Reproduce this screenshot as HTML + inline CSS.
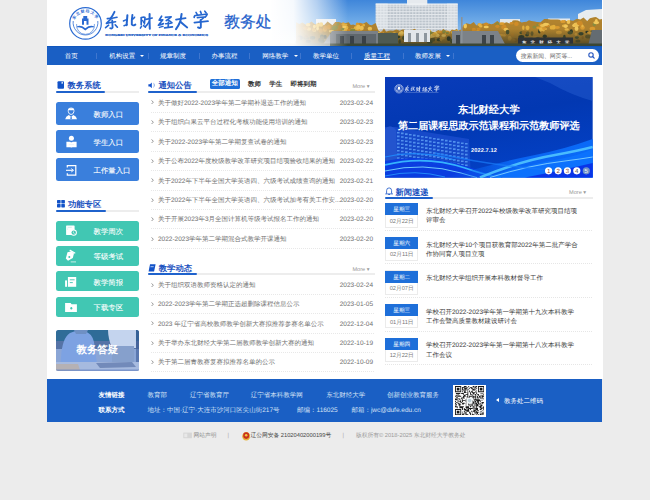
<!DOCTYPE html>
<html><head><meta charset="utf-8">
<style>
*{margin:0;padding:0;box-sizing:border-box}
html,body{text-rendering:geometricPrecision;width:650px;height:500px;overflow:hidden;background:#ececec;font-family:"Liberation Sans",sans-serif;font-size:6.5px;color:#555}
.a{position:absolute;white-space:nowrap}
#wrap{position:absolute;left:46.6px;top:0;width:556.4px;height:379px;background:#fff}
#hdr{position:absolute;left:47px;top:0;width:555.5px;height:46px;overflow:hidden;background:#fff}
#nav{position:absolute;left:47px;top:46px;width:554.8px;height:18.5px;background:#1a5fc4;box-shadow:inset 0 0.8px 0 #0f55bc}
.nv{position:absolute;top:0;height:18.5px;line-height:21.6px;color:#fff;font-size:6.5px;text-align:center;font-weight:500}
.sep{position:absolute;top:6px;width:0.7px;height:6px;background:#3f76cf}
.tri{position:absolute;top:54.5px;width:0;height:0;border-left:2px solid transparent;border-right:2px solid transparent;border-top:2px solid #fff}
#search{position:absolute;left:516px;top:48.6px;width:82.8px;height:13.6px;border-radius:7px;background:#fff}
.ttl{position:absolute;font-size:8.3px;font-weight:bold;color:#1b52c0;line-height:10px}
.uline{position:absolute;height:2px;background:#1f62cc;border-radius:1px}
.gline{position:absolute;height:2px;background:#ededed}
.bbtn{position:absolute;left:56px;width:83px;height:23px;border-radius:2.5px;background:#3a7fdc;color:#fff;font-size:7.4px;line-height:23px}
.bbtn span{position:absolute;left:37.5px;top:0.9px;font-weight:500;-webkit-text-stroke:0.08px #fff}
.tbtn{position:absolute;left:56px;width:83px;height:20px;border-radius:2.5px;background:#41c7b3;color:#fff;font-size:7.4px;line-height:20px}
.tbtn span{position:absolute;left:37.5px;top:1.4px;font-weight:500;-webkit-text-stroke:0.08px #fff}
.li{position:absolute;left:148px;width:227px;height:19.4px;line-height:19.4px;color:#707070;font-size:6.5px}
.li .t{position:absolute;left:10px;top:0}
.li .d{position:absolute;right:2px;top:0}
.li .c{position:absolute;left:2.5px;top:6.8px}
.dot{position:absolute;left:150.5px;width:223px;height:1px;background:repeating-linear-gradient(90deg,#e8e8e8 0 1px,transparent 1px 2px)}
.more{position:absolute;font-size:5.6px;color:#999}
.nb{position:absolute;left:385px;width:33px;height:24.4px;border:0.8px solid #ebebeb;background:#fff}
.nb .w{position:absolute;left:-0.8px;top:-0.8px;width:33px;height:12px;background:#1e6fd9;color:#fff;font-size:5.6px;line-height:14.2px;text-align:center;font-weight:500}
.nb .dt{position:absolute;left:0;top:11.5px;width:31.4px;height:12px;color:#777;font-size:5.7px;line-height:13px;text-align:center}
.nt{position:absolute;left:426px;color:#3a3a3a;font-size:6.5px;line-height:9.2px}
.ndot{position:absolute;left:385px;width:208px;height:1px;background:repeating-linear-gradient(90deg,#e6e6e6 0 1px,transparent 1px 2px)}
#foot{position:absolute;left:47px;top:379.2px;width:555.2px;height:43px;background:#1a5fc4}
.ft{position:absolute;color:#d5e2f5;font-size:6.5px;line-height:8px}
.fh{position:absolute;color:#fff;font-size:6.5px;line-height:8px;font-weight:bold}
.bt{position:absolute;font-size:5.75px;line-height:8px;color:#888}
</style></head><body>
<div id="wrap"></div>
<div id="hdr"></div>
<svg class="a" style="left:47px;top:0" width="554.8" height="46" viewBox="47 0 554.8 46">
<defs>
<linearGradient id="sky" x1="0" y1="0" x2="0" y2="1"><stop offset="0" stop-color="#3f86da"/><stop offset="0.5" stop-color="#72ade8"/><stop offset="1" stop-color="#aad0f2"/></linearGradient>
<linearGradient id="fade" x1="0" y1="0" x2="1" y2="0"><stop offset="0" stop-color="#fff" stop-opacity="1"/><stop offset="0.3" stop-color="#fff" stop-opacity="0.95"/><stop offset="0.6" stop-color="#fff" stop-opacity="0.6"/><stop offset="1" stop-color="#fff" stop-opacity="0"/></linearGradient>
<linearGradient id="fadeb" x1="0" y1="0" x2="0" y2="1"><stop offset="0" stop-color="#fff" stop-opacity="0"/><stop offset="1" stop-color="#fff" stop-opacity="0.55"/></linearGradient>
<linearGradient id="treedark" x1="0" y1="0" x2="0" y2="1"><stop offset="0" stop-color="#242a1c" stop-opacity="0"/><stop offset="1" stop-color="#242a1c" stop-opacity="0.7"/></linearGradient>
<pattern id="win" x="0" y="0" width="3.2" height="2.8" patternUnits="userSpaceOnUse"><rect width="3.2" height="2.8" fill="#e4e8ec"/><rect x="0.3" y="1.4" width="2.4" height="1" fill="#98a4b0"/></pattern>
</defs>
<rect x="270" y="0" width="333" height="46" fill="url(#sky)"/>
<rect x="316" y="19" width="20" height="8" fill="#e6eaee"/>
<rect x="500" y="19" width="20" height="8" fill="#dfe5ea"/>
<rect x="548" y="18.5" width="22" height="5" fill="#e3e8ec"/>
<path d="M578 14 L586 10 L602 9 L602 22 L578 22Z" fill="#e8ecef"/>
<rect x="375.7" y="4" width="82" height="32" fill="url(#win)"/>
<rect x="375.7" y="3.5" width="12" height="32" fill="#e8ecf0" opacity="0.55"/>
<rect x="447" y="3.5" width="10.7" height="32" fill="#e8ecf0" opacity="0.5"/>
<rect x="407" y="0" width="20.3" height="5.5" fill="#e6eaee"/>
<rect x="375.7" y="3.5" width="82" height="1.2" fill="#f0f3f6"/>
<rect x="380" y="29" width="22" height="2" fill="#b8c0c8" opacity="0.6"/>
<g opacity="0.97">
<path d="M296 46 L296 22.2 L296.0 22.2 L299.4 24.0 L302.3 22.4 L305.9 24.7 L308.9 23.5 L311.4 21.5 L314.2 23.8 L316.3 24.7 L318.8 22.4 L320.8 25.5 L324.3 25.0 L327.6 21.6 L330.2 23.5 L332.4 25.3 L335.2 22.1 L338.8 22.0 L342.7 23.3 L345.8 22.9 L348.7 22.2 L350.8 25.0 L353.3 24.6 L355.7 25.4 L359.5 24.5 L363.0 23.8 L366.5 22.0 L369.4 24.8 L371.8 25.2 L375.6 23.1 L378.3 30.3 L381.1 32.5 L383.9 28.6 L386.1 31.4 L390.1 30.5 L393.0 30.7 L396.5 29.4 L399.8 30.7 L403.0 29.2 L405.3 29.9 L409.2 29.9 L412.4 29.7 L414.6 28.8 L418.2 31.6 L421.0 31.2 L424.3 32.1 L428.2 30.1 L432.2 32.3 L435.4 32.0 L438.4 30.0 L440.9 32.0 L443.2 28.8 L446.8 31.6 L449.8 31.8 L451.9 29.5 L454.5 30.2 L456.8 28.8 L459.5 32.1 L463.4 25.3 L466.4 23.2 L470.3 24.2 L473.8 22.0 L476.2 25.2 L479.8 25.2 L483.0 23.2 L486.2 24.8 L488.8 23.4 L491.3 24.2 L493.4 23.8 L497.3 21.0 L500.4 23.4 L504.1 23.0 L506.7 22.2 L510.6 24.0 L512.8 20.6 L515.0 20.3 L517.9 20.6 L521.7 22.5 L523.9 22.0 L526.6 21.7 L529.0 20.2 L531.4 21.0 L534.8 21.5 L536.9 22.1 L540.6 22.2 L544.2 19.0 L547.1 19.1 L550.7 19.4 L554.1 19.5 L557.5 19.6 L559.6 19.8 L562.2 21.8 L564.8 20.1 L567.9 21.7 L570.1 20.3 L573.1 20.7 L577.0 18.8 L580.4 19.5 L583.5 17.5 L587.2 21.0 L589.9 18.3 L593.9 17.3 L596.0 17.0 L599.7 19.6 L602.0 19.0 L602 46Z" fill="#b08028"/>
<ellipse cx="486.1" cy="24.3" rx="2.4" ry="1.7" fill="#d08a22"/>
<ellipse cx="453.0" cy="40.6" rx="1.3" ry="1.2" fill="#2e3622"/>
<ellipse cx="308.9" cy="29.0" rx="2.3" ry="1.7" fill="#eab440"/>
<ellipse cx="435.5" cy="33.6" rx="1.9" ry="1.8" fill="#f4c858"/>
<ellipse cx="575.9" cy="34.4" rx="1.3" ry="1.4" fill="#d49a30"/>
<ellipse cx="515.5" cy="39.9" rx="2.6" ry="2.0" fill="#a06e20"/>
<ellipse cx="371.1" cy="40.5" rx="1.9" ry="1.9" fill="#b88024"/>
<ellipse cx="345.5" cy="27.6" rx="2.8" ry="2.1" fill="#e6ae36"/>
<ellipse cx="465.3" cy="26.1" rx="1.7" ry="2.3" fill="#f4c858"/>
<ellipse cx="523.4" cy="41.7" rx="3.0" ry="1.4" fill="#2e3622"/>
<ellipse cx="359.0" cy="30.0" rx="2.4" ry="2.0" fill="#dc9a2a"/>
<ellipse cx="321.1" cy="24.5" rx="2.1" ry="2.3" fill="#f0c04e"/>
<ellipse cx="571.3" cy="31.3" rx="1.6" ry="2.0" fill="#2e3622"/>
<ellipse cx="344.1" cy="31.1" rx="1.9" ry="1.8" fill="#f4c858"/>
<ellipse cx="381.9" cy="32.9" rx="1.9" ry="1.5" fill="#f0c04e"/>
<ellipse cx="594.4" cy="24.2" rx="1.8" ry="2.0" fill="#8a8a3a"/>
<ellipse cx="511.6" cy="23.2" rx="2.1" ry="1.2" fill="#d08a22"/>
<ellipse cx="431.0" cy="35.9" rx="3.0" ry="2.3" fill="#f0c04e"/>
<ellipse cx="324.9" cy="29.6" rx="2.0" ry="2.3" fill="#dc9a2a"/>
<ellipse cx="346.9" cy="34.3" rx="2.8" ry="1.7" fill="#b88024"/>
<ellipse cx="390.4" cy="35.6" rx="2.8" ry="1.5" fill="#d08a22"/>
<ellipse cx="541.5" cy="38.8" rx="2.9" ry="2.3" fill="#b88024"/>
<ellipse cx="497.6" cy="24.8" rx="2.0" ry="2.2" fill="#8a8a3a"/>
<ellipse cx="497.4" cy="26.2" rx="2.1" ry="1.8" fill="#d08a22"/>
<ellipse cx="485.8" cy="32.4" rx="2.6" ry="1.6" fill="#a06e20"/>
<ellipse cx="343.0" cy="29.2" rx="2.4" ry="1.2" fill="#8a8a3a"/>
<ellipse cx="317.7" cy="25.2" rx="2.1" ry="2.0" fill="#f0c04e"/>
<ellipse cx="406.2" cy="34.9" rx="1.5" ry="1.9" fill="#dc9a2a"/>
<ellipse cx="504.3" cy="35.5" rx="1.5" ry="1.3" fill="#d49a30"/>
<ellipse cx="460.8" cy="31.9" rx="2.4" ry="2.1" fill="#d08a22"/>
<ellipse cx="425.6" cy="34.6" rx="1.6" ry="1.8" fill="#f4c858"/>
<ellipse cx="403.8" cy="36.9" rx="2.3" ry="1.4" fill="#d49a30"/>
<ellipse cx="447.1" cy="32.8" rx="2.7" ry="2.2" fill="#dc9a2a"/>
<ellipse cx="503.9" cy="27.2" rx="2.6" ry="2.3" fill="#d08a22"/>
<ellipse cx="480.7" cy="26.1" rx="1.8" ry="1.5" fill="#eab440"/>
<ellipse cx="582.7" cy="37.4" rx="1.2" ry="1.6" fill="#a06e20"/>
<ellipse cx="481.8" cy="37.6" rx="2.4" ry="1.4" fill="#2e3622"/>
<ellipse cx="359.3" cy="42.0" rx="2.2" ry="2.1" fill="#d49a30"/>
<ellipse cx="574.5" cy="25.4" rx="2.3" ry="1.6" fill="#f4c858"/>
<ellipse cx="545.4" cy="28.9" rx="1.4" ry="1.2" fill="#eab440"/>
<ellipse cx="588.1" cy="36.5" rx="3.0" ry="2.1" fill="#6a5a24"/>
<ellipse cx="361.1" cy="33.6" rx="1.9" ry="2.4" fill="#a06e20"/>
<ellipse cx="333.6" cy="28.3" rx="2.0" ry="2.0" fill="#8a8a3a"/>
<ellipse cx="447.4" cy="33.1" rx="1.6" ry="1.4" fill="#8a8a3a"/>
<ellipse cx="411.7" cy="36.4" rx="1.7" ry="1.8" fill="#50562c"/>
<ellipse cx="359.0" cy="38.2" rx="1.8" ry="1.7" fill="#a06e20"/>
<ellipse cx="521.4" cy="36.7" rx="3.0" ry="1.7" fill="#2e3622"/>
<ellipse cx="306.0" cy="38.0" rx="2.8" ry="1.6" fill="#50562c"/>
<ellipse cx="356.3" cy="28.1" rx="2.5" ry="2.2" fill="#eab440"/>
<ellipse cx="501.9" cy="23.7" rx="2.8" ry="1.4" fill="#dc9a2a"/>
<ellipse cx="437.2" cy="35.3" rx="2.3" ry="1.9" fill="#f4c858"/>
<ellipse cx="317.6" cy="28.6" rx="1.4" ry="2.0" fill="#f4c858"/>
<ellipse cx="535.3" cy="37.8" rx="2.9" ry="1.4" fill="#d49a30"/>
<ellipse cx="568.5" cy="22.1" rx="1.8" ry="2.0" fill="#f0c04e"/>
<ellipse cx="526.0" cy="40.7" rx="1.4" ry="1.9" fill="#3a4226"/>
<ellipse cx="453.3" cy="32.5" rx="2.6" ry="1.8" fill="#e6ae36"/>
<ellipse cx="506.0" cy="29.4" rx="2.4" ry="1.6" fill="#f0c04e"/>
<ellipse cx="553.9" cy="27.0" rx="1.7" ry="2.2" fill="#e6ae36"/>
<ellipse cx="333.7" cy="39.9" rx="2.4" ry="1.2" fill="#3a4226"/>
<ellipse cx="478.0" cy="32.1" rx="2.1" ry="2.4" fill="#dc9a2a"/>
<ellipse cx="428.3" cy="31.2" rx="2.9" ry="1.4" fill="#eab440"/>
<ellipse cx="527.0" cy="34.8" rx="2.0" ry="1.8" fill="#3a4226"/>
<ellipse cx="430.4" cy="33.6" rx="2.7" ry="2.3" fill="#8a8a3a"/>
<ellipse cx="363.7" cy="34.6" rx="2.2" ry="1.3" fill="#50562c"/>
<ellipse cx="343.2" cy="24.2" rx="1.7" ry="2.0" fill="#dc9a2a"/>
<ellipse cx="361.9" cy="24.9" rx="1.5" ry="1.4" fill="#d08a22"/>
<ellipse cx="344.4" cy="26.8" rx="2.2" ry="1.4" fill="#f4c858"/>
<ellipse cx="331.4" cy="31.3" rx="2.6" ry="1.4" fill="#f4c858"/>
<ellipse cx="359.7" cy="24.3" rx="2.6" ry="1.5" fill="#d08a22"/>
<ellipse cx="325.5" cy="27.7" rx="2.2" ry="2.2" fill="#d08a22"/>
<ellipse cx="509.7" cy="38.4" rx="1.9" ry="2.4" fill="#d49a30"/>
<ellipse cx="566.7" cy="29.5" rx="2.2" ry="1.3" fill="#eab440"/>
<ellipse cx="532.0" cy="33.6" rx="1.5" ry="2.3" fill="#6a5a24"/>
<ellipse cx="534.4" cy="27.0" rx="2.0" ry="1.5" fill="#8a8a3a"/>
<ellipse cx="346.2" cy="30.1" rx="2.4" ry="2.0" fill="#eab440"/>
<ellipse cx="576.4" cy="26.5" rx="1.4" ry="1.9" fill="#eab440"/>
<ellipse cx="395.4" cy="39.7" rx="2.6" ry="1.4" fill="#a06e20"/>
<ellipse cx="415.5" cy="34.0" rx="2.4" ry="2.3" fill="#e6ae36"/>
<ellipse cx="410.5" cy="40.5" rx="2.0" ry="2.0" fill="#50562c"/>
<ellipse cx="362.7" cy="39.9" rx="2.5" ry="1.3" fill="#a06e20"/>
<ellipse cx="482.1" cy="31.9" rx="2.6" ry="1.2" fill="#d08a22"/>
<ellipse cx="357.3" cy="24.6" rx="1.6" ry="2.2" fill="#dc9a2a"/>
<ellipse cx="300.0" cy="37.9" rx="2.7" ry="2.4" fill="#3a4226"/>
<ellipse cx="521.3" cy="32.8" rx="1.9" ry="1.5" fill="#4a5028"/>
<ellipse cx="507.6" cy="32.1" rx="1.8" ry="2.3" fill="#4a5028"/>
<ellipse cx="384.1" cy="39.3" rx="2.5" ry="2.1" fill="#6a5a24"/>
<ellipse cx="565.0" cy="25.8" rx="3.0" ry="1.6" fill="#eab440"/>
<ellipse cx="547.3" cy="37.5" rx="2.5" ry="1.2" fill="#a06e20"/>
<ellipse cx="576.4" cy="24.7" rx="3.0" ry="2.1" fill="#f0c04e"/>
<ellipse cx="537.7" cy="39.4" rx="2.8" ry="2.2" fill="#3a4226"/>
<ellipse cx="448.8" cy="38.7" rx="2.1" ry="2.4" fill="#2e3622"/>
<ellipse cx="412.5" cy="41.2" rx="2.6" ry="1.8" fill="#b88024"/>
<ellipse cx="337.9" cy="24.1" rx="1.4" ry="1.7" fill="#8a8a3a"/>
<ellipse cx="440.9" cy="31.8" rx="1.8" ry="1.4" fill="#d08a22"/>
<ellipse cx="386.5" cy="35.9" rx="2.5" ry="1.7" fill="#eab440"/>
<ellipse cx="587.0" cy="32.0" rx="1.7" ry="1.2" fill="#2e3622"/>
<ellipse cx="551.5" cy="41.6" rx="1.7" ry="2.0" fill="#d49a30"/>
<ellipse cx="565.7" cy="26.2" rx="1.8" ry="1.8" fill="#f4c858"/>
<ellipse cx="582.5" cy="27.6" rx="2.3" ry="2.2" fill="#dc9a2a"/>
<ellipse cx="539.1" cy="24.9" rx="2.9" ry="1.3" fill="#8a8a3a"/>
<ellipse cx="401.8" cy="33.3" rx="1.2" ry="2.2" fill="#f0c04e"/>
<ellipse cx="395.4" cy="38.5" rx="1.6" ry="1.4" fill="#d49a30"/>
<ellipse cx="486.2" cy="27.0" rx="2.6" ry="1.3" fill="#f4c858"/>
<ellipse cx="390.4" cy="33.8" rx="1.6" ry="1.7" fill="#8a8a3a"/>
<ellipse cx="539.2" cy="27.7" rx="2.9" ry="1.2" fill="#dc9a2a"/>
<ellipse cx="394.3" cy="34.3" rx="2.0" ry="2.2" fill="#e6ae36"/>
<ellipse cx="485.1" cy="40.2" rx="2.0" ry="2.1" fill="#4a5028"/>
<ellipse cx="353.2" cy="35.1" rx="3.0" ry="2.3" fill="#50562c"/>
<ellipse cx="321.9" cy="36.9" rx="2.1" ry="2.3" fill="#4a5028"/>
<ellipse cx="546.1" cy="40.1" rx="2.3" ry="1.2" fill="#b88024"/>
<ellipse cx="598.3" cy="31.1" rx="2.5" ry="1.2" fill="#6a5a24"/>
<ellipse cx="562.7" cy="41.7" rx="2.9" ry="1.3" fill="#2e3622"/>
<ellipse cx="407.2" cy="37.7" rx="1.9" ry="1.7" fill="#a06e20"/>
<ellipse cx="353.1" cy="29.4" rx="2.6" ry="1.5" fill="#e6ae36"/>
<ellipse cx="579.7" cy="23.1" rx="2.9" ry="2.0" fill="#d08a22"/>
<ellipse cx="376.1" cy="34.9" rx="2.2" ry="1.3" fill="#d08a22"/>
<ellipse cx="452.3" cy="41.0" rx="2.4" ry="2.3" fill="#50562c"/>
<ellipse cx="400.5" cy="34.2" rx="2.7" ry="2.0" fill="#eab440"/>
<ellipse cx="381.5" cy="33.1" rx="2.2" ry="1.6" fill="#d08a22"/>
<ellipse cx="524.1" cy="32.8" rx="2.6" ry="2.0" fill="#a06e20"/>
<ellipse cx="358.3" cy="27.2" rx="2.2" ry="2.4" fill="#f0c04e"/>
<ellipse cx="325.0" cy="37.0" rx="1.7" ry="2.1" fill="#2e3622"/>
<ellipse cx="478.6" cy="29.0" rx="2.1" ry="1.3" fill="#d08a22"/>
<ellipse cx="492.9" cy="35.2" rx="1.4" ry="1.6" fill="#6a5a24"/>
<ellipse cx="358.2" cy="33.7" rx="2.5" ry="1.8" fill="#3a4226"/>
<ellipse cx="492.0" cy="36.5" rx="3.0" ry="2.2" fill="#2e3622"/>
<ellipse cx="375.9" cy="36.5" rx="2.0" ry="1.2" fill="#a06e20"/>
<ellipse cx="592.4" cy="28.8" rx="2.8" ry="2.0" fill="#dc9a2a"/>
<ellipse cx="581.0" cy="33.8" rx="2.7" ry="1.8" fill="#3a4226"/>
<ellipse cx="314.3" cy="30.5" rx="1.9" ry="1.6" fill="#eab440"/>
<ellipse cx="453.2" cy="33.9" rx="1.5" ry="2.3" fill="#8a8a3a"/>
<ellipse cx="352.8" cy="30.0" rx="2.6" ry="1.5" fill="#8a8a3a"/>
<ellipse cx="473.9" cy="30.0" rx="2.1" ry="2.3" fill="#d08a22"/>
<ellipse cx="321.8" cy="41.2" rx="2.7" ry="1.8" fill="#4a5028"/>
<ellipse cx="347.6" cy="31.1" rx="2.7" ry="1.8" fill="#e6ae36"/>
<ellipse cx="596.3" cy="22.6" rx="2.9" ry="1.7" fill="#f4c858"/>
<ellipse cx="433.0" cy="35.4" rx="2.9" ry="1.6" fill="#f4c858"/>
<ellipse cx="500.9" cy="35.3" rx="2.7" ry="1.3" fill="#d49a30"/>
<ellipse cx="308.1" cy="41.4" rx="2.6" ry="1.6" fill="#2e3622"/>
<ellipse cx="539.5" cy="31.4" rx="1.4" ry="2.1" fill="#2e3622"/>
<ellipse cx="312.5" cy="37.8" rx="2.8" ry="1.9" fill="#4a5028"/>
<ellipse cx="405.5" cy="36.5" rx="1.8" ry="1.3" fill="#2e3622"/>
<ellipse cx="422.0" cy="36.0" rx="2.1" ry="1.5" fill="#b88024"/>
<ellipse cx="421.9" cy="38.1" rx="1.3" ry="2.2" fill="#a06e20"/>
<ellipse cx="369.9" cy="28.7" rx="2.2" ry="1.9" fill="#f0c04e"/>
<ellipse cx="535.0" cy="40.5" rx="2.6" ry="1.7" fill="#d49a30"/>
<ellipse cx="568.5" cy="39.4" rx="2.7" ry="1.6" fill="#a06e20"/>
<ellipse cx="527.5" cy="27.8" rx="2.0" ry="2.4" fill="#e6ae36"/>
<ellipse cx="596.3" cy="20.8" rx="1.4" ry="1.8" fill="#f4c858"/>
<ellipse cx="439.6" cy="39.7" rx="3.0" ry="1.6" fill="#3a4226"/>
<ellipse cx="456.9" cy="31.8" rx="2.7" ry="1.4" fill="#f4c858"/>
<ellipse cx="580.5" cy="24.3" rx="2.3" ry="1.8" fill="#d08a22"/>
<ellipse cx="418.3" cy="32.2" rx="2.1" ry="2.3" fill="#e6ae36"/>
<ellipse cx="542.0" cy="29.7" rx="2.9" ry="2.4" fill="#eab440"/>
<ellipse cx="354.4" cy="38.3" rx="1.6" ry="2.2" fill="#b88024"/>
<ellipse cx="347.5" cy="37.1" rx="1.3" ry="1.9" fill="#3a4226"/>
<ellipse cx="469.6" cy="40.7" rx="1.7" ry="1.3" fill="#a06e20"/>
<ellipse cx="564.4" cy="36.9" rx="1.3" ry="2.1" fill="#3a4226"/>
<ellipse cx="576.9" cy="37.6" rx="2.0" ry="1.3" fill="#50562c"/>
<ellipse cx="523.3" cy="27.7" rx="1.2" ry="2.3" fill="#e6ae36"/>
<ellipse cx="592.4" cy="31.9" rx="2.3" ry="1.6" fill="#50562c"/>
<ellipse cx="513.3" cy="40.3" rx="2.2" ry="1.5" fill="#b88024"/>
<ellipse cx="376.2" cy="34.5" rx="1.5" ry="1.3" fill="#d08a22"/>
<ellipse cx="570.1" cy="32.7" rx="2.7" ry="1.8" fill="#4a5028"/>
<ellipse cx="414.9" cy="36.8" rx="2.6" ry="2.4" fill="#a06e20"/>
<ellipse cx="428.4" cy="38.0" rx="1.4" ry="1.8" fill="#2e3622"/>
<ellipse cx="441.2" cy="39.6" rx="1.7" ry="1.8" fill="#d49a30"/>
<ellipse cx="370.6" cy="36.0" rx="1.6" ry="1.4" fill="#50562c"/>
<ellipse cx="512.5" cy="35.0" rx="1.9" ry="1.9" fill="#b88024"/>
<ellipse cx="458.3" cy="36.3" rx="1.7" ry="2.3" fill="#4a5028"/>
<ellipse cx="351.2" cy="38.9" rx="1.5" ry="2.3" fill="#3a4226"/>
<ellipse cx="442.3" cy="38.0" rx="2.7" ry="1.4" fill="#d49a30"/>
<ellipse cx="557.1" cy="27.5" rx="2.8" ry="1.4" fill="#dc9a2a"/>
<ellipse cx="382.5" cy="38.4" rx="1.7" ry="1.6" fill="#d49a30"/>
<ellipse cx="359.4" cy="38.7" rx="1.5" ry="2.2" fill="#d49a30"/>
<ellipse cx="562.9" cy="21.4" rx="2.6" ry="1.5" fill="#dc9a2a"/>
<ellipse cx="490.6" cy="34.3" rx="1.9" ry="2.0" fill="#d49a30"/>
<ellipse cx="399.7" cy="37.1" rx="2.5" ry="1.3" fill="#b88024"/>
<ellipse cx="540.7" cy="24.8" rx="2.4" ry="1.7" fill="#d08a22"/>
<ellipse cx="343.3" cy="41.4" rx="2.0" ry="2.0" fill="#3a4226"/>
<ellipse cx="341.2" cy="39.7" rx="2.1" ry="1.3" fill="#50562c"/>
<ellipse cx="332.4" cy="34.1" rx="2.1" ry="1.6" fill="#2e3622"/>
<ellipse cx="582.5" cy="26.1" rx="1.2" ry="1.5" fill="#eab440"/>
<ellipse cx="547.8" cy="25.1" rx="1.8" ry="1.8" fill="#f4c858"/>
<ellipse cx="401.4" cy="32.9" rx="2.5" ry="1.7" fill="#f4c858"/>
<ellipse cx="547.1" cy="25.9" rx="2.4" ry="1.4" fill="#d08a22"/>
<ellipse cx="544.8" cy="36.3" rx="2.1" ry="1.9" fill="#2e3622"/>
<ellipse cx="348.5" cy="30.4" rx="1.5" ry="1.7" fill="#d08a22"/>
<ellipse cx="558.9" cy="32.5" rx="3.0" ry="1.8" fill="#d49a30"/>
<ellipse cx="320.7" cy="30.8" rx="2.2" ry="2.2" fill="#d08a22"/>
<ellipse cx="313.5" cy="29.8" rx="1.7" ry="1.8" fill="#dc9a2a"/>
<ellipse cx="479.7" cy="24.5" rx="2.4" ry="1.2" fill="#dc9a2a"/>
<ellipse cx="432.7" cy="39.7" rx="2.7" ry="2.0" fill="#6a5a24"/>
<ellipse cx="305.5" cy="28.3" rx="2.4" ry="1.7" fill="#d08a22"/>
<ellipse cx="504.4" cy="26.1" rx="1.6" ry="1.7" fill="#d08a22"/>
<ellipse cx="320.1" cy="40.0" rx="2.1" ry="1.9" fill="#4a5028"/>
<ellipse cx="443.7" cy="35.7" rx="2.3" ry="1.4" fill="#f4c858"/>
<ellipse cx="555.6" cy="41.8" rx="2.2" ry="2.0" fill="#d49a30"/>
<ellipse cx="335.4" cy="27.5" rx="2.6" ry="2.3" fill="#8a8a3a"/>
<ellipse cx="598.7" cy="37.1" rx="1.4" ry="1.4" fill="#d49a30"/>
<ellipse cx="516.4" cy="23.9" rx="2.3" ry="2.1" fill="#d08a22"/>
<ellipse cx="434.3" cy="34.4" rx="2.4" ry="1.7" fill="#e6ae36"/>
<ellipse cx="335.6" cy="40.2" rx="2.3" ry="1.8" fill="#6a5a24"/>
<ellipse cx="384.8" cy="38.9" rx="2.2" ry="1.7" fill="#6a5a24"/>
<ellipse cx="479.6" cy="24.8" rx="1.6" ry="1.5" fill="#eab440"/>
<ellipse cx="564.1" cy="38.9" rx="1.9" ry="2.2" fill="#4a5028"/>
<ellipse cx="399.7" cy="41.6" rx="1.2" ry="2.3" fill="#4a5028"/>
<ellipse cx="544.1" cy="28.6" rx="2.0" ry="1.3" fill="#dc9a2a"/>
<ellipse cx="314.4" cy="26.6" rx="1.5" ry="1.8" fill="#f4c858"/>
<ellipse cx="479.7" cy="32.1" rx="1.4" ry="1.7" fill="#d08a22"/>
<ellipse cx="344.9" cy="24.7" rx="2.6" ry="1.3" fill="#e6ae36"/>
<ellipse cx="383.3" cy="35.1" rx="1.7" ry="2.2" fill="#e6ae36"/>
<ellipse cx="361.7" cy="28.1" rx="2.1" ry="2.3" fill="#f0c04e"/>
<ellipse cx="444.1" cy="31.7" rx="1.8" ry="1.7" fill="#8a8a3a"/>
<ellipse cx="342.3" cy="34.9" rx="1.2" ry="2.2" fill="#a06e20"/>
<ellipse cx="355.6" cy="35.1" rx="2.2" ry="2.0" fill="#3a4226"/>
<ellipse cx="322.3" cy="38.4" rx="2.0" ry="2.1" fill="#6a5a24"/>
<ellipse cx="577.9" cy="41.0" rx="2.6" ry="1.6" fill="#6a5a24"/>
<ellipse cx="378.3" cy="33.1" rx="2.4" ry="1.3" fill="#f0c04e"/>
<ellipse cx="297.1" cy="41.9" rx="1.8" ry="1.3" fill="#50562c"/>
<ellipse cx="527.8" cy="33.1" rx="1.8" ry="1.8" fill="#6a5a24"/>
<ellipse cx="552.6" cy="27.4" rx="2.9" ry="2.2" fill="#e6ae36"/>
<ellipse cx="405.0" cy="37.8" rx="2.9" ry="2.3" fill="#4a5028"/>
<ellipse cx="429.7" cy="41.9" rx="2.9" ry="1.8" fill="#50562c"/>
<ellipse cx="542.6" cy="25.5" rx="2.6" ry="1.5" fill="#f0c04e"/>
<ellipse cx="545.7" cy="24.3" rx="2.9" ry="1.6" fill="#f4c858"/>
<ellipse cx="352.4" cy="31.0" rx="2.1" ry="2.3" fill="#8a8a3a"/>
<ellipse cx="466.6" cy="39.4" rx="1.9" ry="2.2" fill="#50562c"/>
<ellipse cx="328.9" cy="26.9" rx="2.0" ry="2.3" fill="#d08a22"/>
<ellipse cx="589.6" cy="32.8" rx="2.6" ry="1.4" fill="#d49a30"/>
<ellipse cx="308.1" cy="24.8" rx="2.3" ry="1.8" fill="#f0c04e"/>
<ellipse cx="298.7" cy="38.3" rx="1.5" ry="2.0" fill="#a06e20"/>
<ellipse cx="397.4" cy="37.0" rx="3.0" ry="1.4" fill="#3a4226"/>
<ellipse cx="542.3" cy="32.6" rx="1.8" ry="1.7" fill="#b88024"/>
<ellipse cx="410.0" cy="37.6" rx="2.4" ry="2.3" fill="#2e3622"/>
<ellipse cx="438.9" cy="32.1" rx="2.1" ry="1.3" fill="#dc9a2a"/>
<ellipse cx="395.1" cy="41.0" rx="2.0" ry="2.0" fill="#2e3622"/>
<ellipse cx="363.7" cy="25.2" rx="1.3" ry="1.4" fill="#e6ae36"/>
<ellipse cx="306.1" cy="36.9" rx="2.0" ry="1.9" fill="#a06e20"/>
<ellipse cx="576.5" cy="28.8" rx="1.9" ry="2.2" fill="#f4c858"/>
<rect x="296" y="29" width="306" height="17" fill="url(#treedark)"/>
</g>
<path d="M322 46 L332 31 L378 31 L378 46 Z" fill="#7a8086"/>
<path d="M336 34 L376 34 L376 46 L336 46Z" fill="#5f676d"/>
<rect x="340" y="36" width="4" height="10" fill="#394046"/><rect x="350" y="36" width="4" height="10" fill="#394046"/><rect x="362" y="36" width="4" height="10" fill="#394046"/>
<rect x="378" y="33" width="20" height="13" fill="#4e5a52"/>
<rect x="404" y="30" width="26" height="12" fill="#e2e6ea"/>
<rect x="408" y="33" width="3" height="9" fill="#8d969e"/><rect x="416" y="33" width="3" height="9" fill="#8d969e"/><rect x="424" y="33" width="3" height="9" fill="#8d969e"/>
<path d="M452 46 L452 31 L498 31 L506 46Z" fill="#7c8288"/>
<rect x="456" y="35" width="4" height="11" fill="#3c4348"/><rect x="482" y="35" width="4" height="11" fill="#3c4348"/><rect x="490" y="35" width="4" height="11" fill="#3c4348"/>
<rect x="461" y="17" width="1.6" height="29" fill="#8a9298"/>
<rect x="518" y="37.5" width="55" height="8.5" fill="#2e3236"/>
<g fill="#e8e8e8" font-size="4.4" font-weight="bold"><text x="522" y="43.8" letter-spacing="4.2">东北财经大学</text></g>
<path d="M588 46 L592 30 L602 30 L602 46Z" fill="#646c72"/>
<rect x="270" y="43.5" width="333" height="2.5" fill="#3a4636"/>
<rect x="270" y="0" width="78" height="46" fill="url(#fade)"/>
<rect x="270" y="26" width="60" height="20" fill="url(#fadeb)"/>
<rect x="47" y="0" width="223.5" height="46" fill="#fff"/>
<!-- logo -->
<g fill="none" stroke="#2b6bd2">
<circle cx="85.5" cy="23.4" r="15.8" stroke-width="1.2"/>
<path d="M73.2 21 A12.4 12.4 0 1 0 97.8 21" stroke-width="0.8"/>
<path d="M76.6 24 A9 9 0 1 0 94.4 24" stroke-width="0.6"/>
</g>
<g fill="#2b6bd2">
<path d="M82 24.8 L82 18.5 L83.3 18.5 L83.3 16 L87.2 16 L87.2 18.5 L88.5 18.5 L88.5 24.8 L86.5 24.8 L86.5 21 L84 21 L84 24.8Z"/>
<path d="M77 26.2 Q81 24.8 85.3 28.2 Q89.5 24.8 94 26.2 L93.6 27.4 Q89.5 26.5 85.3 30.4 Q81 26.5 77.4 27.4Z"/>
<path id="arc" d="M74 21.5 A11.8 11.8 0 0 1 97 21.5" fill="none" stroke="none"/><text font-size="3.8" font-weight="bold" font-family="Liberation Serif"><textPath href="#arc" startOffset="50%" text-anchor="middle" letter-spacing="0.9">东北财经大学</textPath></text>
</g>
<g fill="none" stroke="#2566cf" stroke-linecap="round" stroke-linejoin="round">
<path d="M114.5 11.8 Q113 15 110.5 18.6" stroke-width="1.9"/>
<path d="M107.3 18.6 Q112 18.4 117 17.2" stroke-width="1.6"/>
<path d="M111 18.8 Q108.5 21.2 106.4 23.4 Q110.5 22.6 115.6 21.8" stroke-width="1.6"/>
<path d="M112.2 20.4 L112.6 27.6 Q111.8 29 110.2 28.2" stroke-width="1.8"/>
<path d="M108.6 25.2 L105.6 27.6" stroke-width="1.7"/>
<path d="M115.2 24.8 L117.4 27.2" stroke-width="1.7"/>
<path d="M127.4 15.2 Q127 20 126.6 25.2" stroke-width="2.0"/>
<path d="M123.4 21 Q125.4 20 127 19.4" stroke-width="1.5"/>
<path d="M124 25.8 L127 24.6" stroke-width="1.5"/>
<path d="M132.4 15 Q131.6 20 131.8 24.4 Q132.6 26.2 135.4 24.6" stroke-width="1.9"/>
<path d="M131.8 19.6 Q133.6 18.6 134.6 17.2" stroke-width="1.5"/>
<path d="M141.2 17.8 L141.2 24.6" stroke-width="1.7"/>
<path d="M141.4 17.6 Q144 16.8 145 17.4 L144.4 24" stroke-width="1.6"/>
<path d="M142.6 20.4 L143.6 22.4" stroke-width="1.3"/>
<path d="M141.6 26.2 L140.4 28.2 M143.6 25.6 L145.4 27.2" stroke-width="1.5"/>
<path d="M145.8 19.4 Q149 18.8 152.2 18" stroke-width="1.6"/>
<path d="M149.6 14 Q149.4 21 149.8 28.8" stroke-width="2.0"/>
<path d="M149.2 21.6 Q147.6 24.6 145.4 26.6" stroke-width="1.6"/>
<path d="M161.6 16.2 Q160 18.6 159.2 20.2 Q161 20 162.8 19.8 Q160.4 22.8 158.4 25.2 Q161 24.6 163.4 23.6" stroke-width="1.7"/>
<path d="M159.4 27.4 L163 26.4" stroke-width="1.5"/>
<path d="M165.4 17.4 Q168.6 16.8 171.2 16.8 Q168.6 19 166.2 20.6" stroke-width="1.6"/>
<path d="M167.6 19.6 Q170 21 172 22.8" stroke-width="1.6"/>
<path d="M165.6 23.8 L171 23.4" stroke-width="1.4"/>
<path d="M168.4 22 L168.2 27.2" stroke-width="1.7"/>
<path d="M164.6 27.8 Q168.6 27.4 172.4 26.8" stroke-width="1.7"/>
<path d="M176 19.6 Q180.5 18.8 185.6 18.2" stroke-width="1.7"/>
<path d="M181.6 14 Q181 18 180.2 21.6 Q178.6 25.6 176 29.2" stroke-width="2.0"/>
<path d="M180.4 21.8 Q183.4 24.6 187.2 27.4" stroke-width="1.9"/>
<path d="M196 12.4 L197.2 14.4 M200.4 11.4 L201.2 13.4 M204.8 11.2 L206.2 13" stroke-width="1.6"/>
<path d="M194.2 17.4 Q194 15.6 196 15.4 Q202 14.6 207.2 14 Q206.6 16 205.2 17.2" stroke-width="1.7"/>
<path d="M197.4 17.6 Q201 17 204.4 17 Q202.6 18.8 200.6 20.2" stroke-width="1.6"/>
<path d="M200.6 20.2 Q201 24 200.8 27.4 Q199.8 28.6 198 27.4" stroke-width="1.9"/>
<path d="M194.4 22.6 Q201 21.8 208 21.2" stroke-width="1.7"/>
</g>
<text x="105.3" y="35.9" font-size="3" fill="#1d5cc4" font-family="Liberation Serif" font-weight="bold" stroke="#1d5cc4" stroke-width="0.2" textLength="102.7" lengthAdjust="spacingAndGlyphs">DONGBEI UNIVERSITY OF FINANCE &amp; ECONOMICS</text>
<text x="224.2" y="27" font-size="15.8" fill="#1f5fcb" stroke="#1f5fcb" stroke-width="0.25">教务处</text>
</svg>
<div id="nav"></div>
<div class="nv a" style="left:46.2px;width:50px;top:46px">首页</div>
<div class="nv a" style="left:97.2px;width:50px;top:46px">机构设置</div>
<div class="nv a" style="left:148px;width:50px;top:46px">规章制度</div>
<div class="nv a" style="left:199.5px;width:50px;top:46px">办事流程</div>
<div class="nv a" style="left:250.3px;width:50px;top:46px">网络教学</div>
<div class="nv a" style="left:301.1px;width:50px;top:46px">教学单位</div>
<div class="nv a" style="left:352.1px;width:50px;top:46px;text-decoration:underline">质量工程</div>
<div class="nv a" style="left:403.1px;width:50px;top:46px">教师发展</div>
<div class="sep" style="left:96.2px;top:52.5px"></div>
<div class="sep" style="left:148px;top:52.5px"></div>
<div class="sep" style="left:199px;top:52.5px"></div>
<div class="sep" style="left:249.2px;top:52.5px"></div>
<div class="sep" style="left:300.4px;top:52.5px"></div>
<div class="sep" style="left:351.3px;top:52.5px"></div>
<div class="sep" style="left:403px;top:52.5px"></div>
<div class="sep" style="left:453.4px;top:52.5px"></div>
<div class="tri" style="left:140.2px"></div>
<div class="tri" style="left:293.5px"></div>
<div class="tri" style="left:446px"></div>
<div id="search"><span class="a" style="left:4.8px;top:4.8px;font-size:5.8px;line-height:8px;color:#666">搜索新闻、网页等...</span>
<svg class="a" style="left:71.5px;top:3px" width="7" height="7" viewBox="0 0 7 7"><circle cx="3" cy="2.9" r="2.2" fill="none" stroke="#2858c0" stroke-width="1.1"/><path d="M4.6 4.5 L6.2 6.1" stroke="#2858c0" stroke-width="1.2" stroke-linecap="round"/></svg></div>
<div class="ttl a" style="left:67.5px;top:80.3px">教务系统</div>
<div class="gline" style="left:56px;top:91px;width:83px;"></div>
<div class="uline" style="left:56px;top:91px;width:49px"></div>
<div class="bbtn" style="top:102px"><span>教师入口</span></div>
<div class="bbtn" style="top:130px"><span>学生入口</span></div>
<div class="bbtn" style="top:158px"><span>工作量入口</span></div>
<div class="ttl a" style="left:68px;top:199px">功能专区</div>
<div class="gline" style="left:56px;top:209.6px;width:83px;"></div>
<div class="uline" style="left:56px;top:209.6px;width:49.8px"></div>
<div class="tbtn" style="top:220.5px"><span>教学周次</span></div>
<div class="tbtn" style="top:246px"><span>等级考试</span></div>
<div class="tbtn" style="top:271.3px"><span>教学简报</span></div>
<div class="tbtn" style="top:296.5px"><span>下载专区</span></div>
<div id="qa" class="a" style="left:56px;top:330px;width:83.3px;height:41px;border-radius:2.5px;overflow:hidden">
<svg width="83.3" height="41" viewBox="0 0 83.3 41" style="position:absolute;left:0;top:0">
<rect width="83.3" height="41" fill="#86a2d4"/>
<rect width="83.3" height="11" fill="#2f6c98"/>
<rect y="11" width="83.3" height="8" fill="#5573a6"/>
<rect y="19" width="83.3" height="14" fill="#8ba6d6"/>
<path d="M4 41 L5 28 Q6 8 14 3 Q20 0 28 1 Q36 3 38 12 L40 26 L42 41Z" fill="#7da2e2"/>
<path d="M18 0 L32 0 L30 4 L20 4Z" fill="#6f90c4"/>
<path d="M52 0 L80 0 L80 18 L56 18 Q52 8 52 0Z" fill="#c4d4ee"/>
<path d="M56 16 L78 16 L78 32 L56 32Z" fill="#86a0cc"/>
<path d="M80 0 L83.3 0 L83.3 41 L80 41Z" fill="#3a5a96" opacity="0.6"/>
<rect y="32" width="83.3" height="9" fill="#a6badf"/>
<path d="M0 34 L22 34 L24 40 L0 41Z" fill="#c4a88a" opacity="0.5"/>
<path d="M40 33 L76 32 L80 37 L44 38Z" fill="#5d76aa" opacity="0.7"/>
<rect y="39.5" width="83.3" height="1.5" fill="#6a86c0" opacity="0.7"/>
</svg>
<div class="a" style="left:20.5px;top:13.5px;font-size:10.4px;line-height:13px;font-weight:bold;color:#fff">教务答疑</div>
</div>
<div class="ttl a" style="left:158.5px;top:80px">通知公告</div>
<div class="gline" style="left:148px;top:90.8px;width:227px;"></div>
<div class="uline" style="left:148px;top:90.8px;width:48.8px"></div>
<div class="a" style="left:209.7px;top:79.4px;width:30.3px;height:9.6px;border-radius:1.5px;background:#1f6fd8;color:#fff;font-weight:bold;font-size:6.5px;line-height:9.6px;text-align:center">全部通知</div>
<div class="a" style="left:248px;top:79.6px;color:#333;font-weight:bold;font-size:6.5px;line-height:9px">教师</div>
<div class="a" style="left:269.3px;top:79.6px;color:#333;font-weight:bold;font-size:6.5px;line-height:9px">学生</div>
<div class="a" style="left:290.5px;top:79.6px;color:#333;font-weight:bold;font-size:6.5px;line-height:9px">即将到期</div>
<div class="more" style="left:352.4px;top:83px;line-height:8px">More ▾</div>
<div class="ttl a" style="left:158.8px;top:263px">教学动态</div>
<div class="gline" style="left:148px;top:273.3px;width:227px;"></div>
<div class="uline" style="left:148px;top:273.3px;width:49px"></div>
<div class="more" style="left:352.4px;top:266px;line-height:8px">More ▾</div>
<div id="banner" class="a" style="left:385px;top:77.2px;width:207.7px;height:100.5px;overflow:hidden">
<svg width="207.7" height="100.5" viewBox="0 0 207.7 100.5" style="position:absolute;left:0;top:0">
<defs>
<linearGradient id="bg1" x1="0" y1="0" x2="0.35" y2="1"><stop offset="0" stop-color="#0a3cba"/><stop offset="0.5" stop-color="#0238b2"/><stop offset="1" stop-color="#0340c4"/></linearGradient>
<linearGradient id="rw" x1="0" y1="0" x2="1" y2="0"><stop offset="0" stop-color="#0a60f0" stop-opacity="0"/><stop offset="0.45" stop-color="#0a66f4" stop-opacity="0.95"/><stop offset="1" stop-color="#0a6af8" stop-opacity="1"/></linearGradient>
<linearGradient id="bld2" x1="0" y1="0" x2="0" y2="1"><stop offset="0" stop-color="#3a70dc" stop-opacity="0.5"/><stop offset="1" stop-color="#3f86f0" stop-opacity="0.7"/></linearGradient>
</defs>
<rect width="207.7" height="100.5" fill="url(#bg1)"/>
<path d="M150 0 L207.7 0 L207.7 24 Q186 18 165 6Z" fill="#3a74e0" opacity="0.3"/>

<path d="M0 50 L10 50 L84 62 L86 100.5 L0 100.5Z" fill="#1a4ccc" opacity="0.85"/>
<path d="M12.0 55.0h2.6v1.6h-2.6zM16.0 55.6h2.6v1.6h-2.6zM20.0 56.3h2.6v1.6h-2.6zM24.0 57.0h2.6v1.6h-2.6zM28.0 57.6h2.6v1.6h-2.6zM32.0 58.2h2.6v1.6h-2.6zM36.0 58.9h2.6v1.6h-2.6zM40.0 59.5h2.6v1.6h-2.6zM44.0 60.2h2.6v1.6h-2.6zM48.0 60.9h2.6v1.6h-2.6zM52.0 61.5h2.6v1.6h-2.6zM56.0 62.1h2.6v1.6h-2.6zM60.0 62.8h2.6v1.6h-2.6zM64.0 63.5h2.6v1.6h-2.6zM68.0 64.1h2.6v1.6h-2.6zM72.0 64.8h2.6v1.6h-2.6zM76.0 65.4h2.6v1.6h-2.6zM80.0 66.0h2.6v1.6h-2.6zM12.0 58.6h2.6v1.6h-2.6zM16.0 59.2h2.6v1.6h-2.6zM20.0 59.9h2.6v1.6h-2.6zM24.0 60.6h2.6v1.6h-2.6zM28.0 61.2h2.6v1.6h-2.6zM32.0 61.9h2.6v1.6h-2.6zM36.0 62.5h2.6v1.6h-2.6zM40.0 63.1h2.6v1.6h-2.6zM44.0 63.8h2.6v1.6h-2.6zM48.0 64.5h2.6v1.6h-2.6zM52.0 65.1h2.6v1.6h-2.6zM56.0 65.8h2.6v1.6h-2.6zM60.0 66.4h2.6v1.6h-2.6zM64.0 67.0h2.6v1.6h-2.6zM68.0 67.7h2.6v1.6h-2.6zM72.0 68.3h2.6v1.6h-2.6zM76.0 69.0h2.6v1.6h-2.6zM80.0 69.7h2.6v1.6h-2.6zM12.0 62.2h2.6v1.6h-2.6zM16.0 62.9h2.6v1.6h-2.6zM20.0 63.5h2.6v1.6h-2.6zM24.0 64.2h2.6v1.6h-2.6zM28.0 64.8h2.6v1.6h-2.6zM32.0 65.5h2.6v1.6h-2.6zM36.0 66.1h2.6v1.6h-2.6zM40.0 66.8h2.6v1.6h-2.6zM44.0 67.4h2.6v1.6h-2.6zM48.0 68.0h2.6v1.6h-2.6zM52.0 68.7h2.6v1.6h-2.6zM56.0 69.4h2.6v1.6h-2.6zM60.0 70.0h2.6v1.6h-2.6zM64.0 70.7h2.6v1.6h-2.6zM68.0 71.3h2.6v1.6h-2.6zM72.0 72.0h2.6v1.6h-2.6zM76.0 72.6h2.6v1.6h-2.6zM80.0 73.2h2.6v1.6h-2.6zM12.0 65.8h2.6v1.6h-2.6zM16.0 66.5h2.6v1.6h-2.6zM20.0 67.1h2.6v1.6h-2.6zM24.0 67.8h2.6v1.6h-2.6zM28.0 68.4h2.6v1.6h-2.6zM32.0 69.0h2.6v1.6h-2.6zM36.0 69.7h2.6v1.6h-2.6zM40.0 70.3h2.6v1.6h-2.6zM44.0 71.0h2.6v1.6h-2.6zM48.0 71.6h2.6v1.6h-2.6zM52.0 72.3h2.6v1.6h-2.6zM56.0 73.0h2.6v1.6h-2.6zM60.0 73.6h2.6v1.6h-2.6zM64.0 74.2h2.6v1.6h-2.6zM68.0 74.9h2.6v1.6h-2.6zM72.0 75.5h2.6v1.6h-2.6zM76.0 76.2h2.6v1.6h-2.6zM80.0 76.8h2.6v1.6h-2.6zM12.0 69.4h2.6v1.6h-2.6zM16.0 70.1h2.6v1.6h-2.6zM20.0 70.7h2.6v1.6h-2.6zM24.0 71.4h2.6v1.6h-2.6zM28.0 72.0h2.6v1.6h-2.6zM32.0 72.7h2.6v1.6h-2.6zM36.0 73.3h2.6v1.6h-2.6zM40.0 74.0h2.6v1.6h-2.6zM44.0 74.6h2.6v1.6h-2.6zM48.0 75.2h2.6v1.6h-2.6zM52.0 75.9h2.6v1.6h-2.6zM56.0 76.6h2.6v1.6h-2.6zM60.0 77.2h2.6v1.6h-2.6zM64.0 77.9h2.6v1.6h-2.6zM68.0 78.5h2.6v1.6h-2.6zM72.0 79.2h2.6v1.6h-2.6zM76.0 79.8h2.6v1.6h-2.6zM80.0 80.5h2.6v1.6h-2.6zM12.0 73.0h2.6v1.6h-2.6zM16.0 73.7h2.6v1.6h-2.6zM20.0 74.3h2.6v1.6h-2.6zM24.0 75.0h2.6v1.6h-2.6zM28.0 75.6h2.6v1.6h-2.6zM32.0 76.2h2.6v1.6h-2.6zM36.0 76.9h2.6v1.6h-2.6zM40.0 77.5h2.6v1.6h-2.6zM44.0 78.2h2.6v1.6h-2.6zM48.0 78.8h2.6v1.6h-2.6zM52.0 79.5h2.6v1.6h-2.6zM56.0 80.2h2.6v1.6h-2.6zM60.0 80.8h2.6v1.6h-2.6zM64.0 81.5h2.6v1.6h-2.6zM68.0 82.1h2.6v1.6h-2.6zM72.0 82.8h2.6v1.6h-2.6zM76.0 83.4h2.6v1.6h-2.6zM80.0 84.0h2.6v1.6h-2.6zM12.0 76.6h2.6v1.6h-2.6zM16.0 77.2h2.6v1.6h-2.6zM20.0 77.9h2.6v1.6h-2.6zM24.0 78.5h2.6v1.6h-2.6zM28.0 79.2h2.6v1.6h-2.6zM32.0 79.8h2.6v1.6h-2.6zM36.0 80.5h2.6v1.6h-2.6zM40.0 81.1h2.6v1.6h-2.6zM44.0 81.8h2.6v1.6h-2.6zM48.0 82.4h2.6v1.6h-2.6zM52.0 83.1h2.6v1.6h-2.6zM56.0 83.8h2.6v1.6h-2.6zM60.0 84.4h2.6v1.6h-2.6zM64.0 85.0h2.6v1.6h-2.6zM68.0 85.7h2.6v1.6h-2.6zM72.0 86.3h2.6v1.6h-2.6zM76.0 87.0h2.6v1.6h-2.6zM80.0 87.6h2.6v1.6h-2.6zM12.0 80.2h2.6v1.6h-2.6zM16.0 80.9h2.6v1.6h-2.6zM20.0 81.5h2.6v1.6h-2.6zM24.0 82.2h2.6v1.6h-2.6zM28.0 82.8h2.6v1.6h-2.6zM32.0 83.5h2.6v1.6h-2.6zM36.0 84.1h2.6v1.6h-2.6zM40.0 84.8h2.6v1.6h-2.6zM44.0 85.4h2.6v1.6h-2.6zM48.0 86.0h2.6v1.6h-2.6zM52.0 86.7h2.6v1.6h-2.6zM56.0 87.4h2.6v1.6h-2.6zM60.0 88.0h2.6v1.6h-2.6zM64.0 88.7h2.6v1.6h-2.6zM68.0 89.3h2.6v1.6h-2.6zM72.0 90.0h2.6v1.6h-2.6zM76.0 90.6h2.6v1.6h-2.6zM80.0 91.2h2.6v1.6h-2.6zM12.0 83.8h2.6v1.6h-2.6zM16.0 84.5h2.6v1.6h-2.6zM20.0 85.1h2.6v1.6h-2.6zM24.0 85.8h2.6v1.6h-2.6zM28.0 86.4h2.6v1.6h-2.6zM32.0 87.0h2.6v1.6h-2.6zM36.0 87.7h2.6v1.6h-2.6zM40.0 88.3h2.6v1.6h-2.6zM44.0 89.0h2.6v1.6h-2.6zM48.0 89.6h2.6v1.6h-2.6zM52.0 90.3h2.6v1.6h-2.6zM56.0 91.0h2.6v1.6h-2.6zM60.0 91.6h2.6v1.6h-2.6z" fill="#5c9cf4" opacity="0.85"/>
<path d="M0 52 Q5 46 11 53 L12 82 L0 86Z" fill="#2a5ad0" opacity="0.7"/>
<path d="M0 100.5 L0 84 Q40 76 84 90 Q100 96 118 100.5Z" fill="#0a3ce0" opacity="0.95"/>
<path d="M0 88 Q40 78 80 91 Q100 98 116 100.5" fill="none" stroke="#38b8ff" stroke-width="1.8" opacity="0.95"/>
<path d="M0 94 Q38 85 76 96 Q86 99 92 100.5" fill="none" stroke="#7ad8ff" stroke-width="1" opacity="0.9"/>
<path d="M0 80 Q34 72 70 83" fill="none" stroke="#1e8cff" stroke-width="1.2" opacity="0.85"/>
<path d="M0 99 Q30 92 60 100" fill="none" stroke="#2a9cff" stroke-width="1" opacity="0.8"/>
<path d="M60 100.5 Q110 86 150 78 Q180 72 207.7 62 L207.7 100.5Z" fill="url(#rw)"/>
<path d="M100 100.5 Q140 88 175 82 Q195 78 207.7 72 L207.7 100.5Z" fill="#0c74ff" opacity="0.8"/>
<path d="M95 100.5 Q135 84 170 78 Q192 74 207.7 70" fill="none" stroke="#50c4ff" stroke-width="2.6" opacity="0.9"/>
<path d="M105 100.5 Q145 88 180 84 Q196 82 207.7 80" fill="none" stroke="#9ae4ff" stroke-width="0.9" opacity="0.85"/>
<path d="M50 76 Q120 92 207.7 96" fill="none" stroke="#1a7cf8" stroke-width="1.6" opacity="0.7"/>
<path d="M140 100.5 Q175 94 207.7 86 L207.7 100.5Z" fill="#0820e0" opacity="0.75"/>
<g fill="none" stroke="#fff" stroke-width="0.5"><circle cx="14" cy="11.8" r="4.2"/><circle cx="14" cy="11.8" r="3.2"/></g>
<path d="M13 9.8 L15 9.8 L15.4 12.6 L12.6 12.6Z M11.6 13 Q14 12.4 16.4 13 L16.4 13.6 Q14 13 11.6 13.6Z" fill="#fff"/>
<g fill="none" stroke="#fff" stroke-linecap="round" stroke-linejoin="round" transform="translate(19.6,11.6) scale(0.335) translate(-105,-20)">
<path d="M114.5 11.8 Q113 15 110.5 18.6" stroke-width="1.9"/>
<path d="M107.3 18.6 Q112 18.4 117 17.2" stroke-width="1.6"/>
<path d="M111 18.8 Q108.5 21.2 106.4 23.4 Q110.5 22.6 115.6 21.8" stroke-width="1.6"/>
<path d="M112.2 20.4 L112.6 27.6 Q111.8 29 110.2 28.2" stroke-width="1.8"/>
<path d="M108.6 25.2 L105.6 27.6" stroke-width="1.7"/>
<path d="M115.2 24.8 L117.4 27.2" stroke-width="1.7"/>
<path d="M127.4 15.2 Q127 20 126.6 25.2" stroke-width="2.0"/>
<path d="M123.4 21 Q125.4 20 127 19.4" stroke-width="1.5"/>
<path d="M124 25.8 L127 24.6" stroke-width="1.5"/>
<path d="M132.4 15 Q131.6 20 131.8 24.4 Q132.6 26.2 135.4 24.6" stroke-width="1.9"/>
<path d="M131.8 19.6 Q133.6 18.6 134.6 17.2" stroke-width="1.5"/>
<path d="M141.2 17.8 L141.2 24.6" stroke-width="1.7"/>
<path d="M141.4 17.6 Q144 16.8 145 17.4 L144.4 24" stroke-width="1.6"/>
<path d="M142.6 20.4 L143.6 22.4" stroke-width="1.3"/>
<path d="M141.6 26.2 L140.4 28.2 M143.6 25.6 L145.4 27.2" stroke-width="1.5"/>
<path d="M145.8 19.4 Q149 18.8 152.2 18" stroke-width="1.6"/>
<path d="M149.6 14 Q149.4 21 149.8 28.8" stroke-width="2.0"/>
<path d="M149.2 21.6 Q147.6 24.6 145.4 26.6" stroke-width="1.6"/>
<path d="M161.6 16.2 Q160 18.6 159.2 20.2 Q161 20 162.8 19.8 Q160.4 22.8 158.4 25.2 Q161 24.6 163.4 23.6" stroke-width="1.7"/>
<path d="M159.4 27.4 L163 26.4" stroke-width="1.5"/>
<path d="M165.4 17.4 Q168.6 16.8 171.2 16.8 Q168.6 19 166.2 20.6" stroke-width="1.6"/>
<path d="M167.6 19.6 Q170 21 172 22.8" stroke-width="1.6"/>
<path d="M165.6 23.8 L171 23.4" stroke-width="1.4"/>
<path d="M168.4 22 L168.2 27.2" stroke-width="1.7"/>
<path d="M164.6 27.8 Q168.6 27.4 172.4 26.8" stroke-width="1.7"/>
<path d="M176 19.6 Q180.5 18.8 185.6 18.2" stroke-width="1.7"/>
<path d="M181.6 14 Q181 18 180.2 21.6 Q178.6 25.6 176 29.2" stroke-width="2.0"/>
<path d="M180.4 21.8 Q183.4 24.6 187.2 27.4" stroke-width="1.9"/>
<path d="M196 12.4 L197.2 14.4 M200.4 11.4 L201.2 13.4 M204.8 11.2 L206.2 13" stroke-width="1.6"/>
<path d="M194.2 17.4 Q194 15.6 196 15.4 Q202 14.6 207.2 14 Q206.6 16 205.2 17.2" stroke-width="1.7"/>
<path d="M197.4 17.6 Q201 17 204.4 17 Q202.6 18.8 200.6 20.2" stroke-width="1.6"/>
<path d="M200.6 20.2 Q201 24 200.8 27.4 Q199.8 28.6 198 27.4" stroke-width="1.9"/>
<path d="M194.4 22.6 Q201 21.8 208 21.2" stroke-width="1.7"/>
</g>
<rect x="19.5" y="15.2" width="34" height="0.5" fill="#cfdcf5" opacity="0.5"/>
<text x="103.8" y="35.6" font-size="10.3" fill="#fff" font-weight="bold" text-anchor="middle">东北财经大学</text>
<text x="103.8" y="51.8" font-size="10.1" fill="#fff" font-weight="bold" text-anchor="middle">第二届课程思政示范课程和示范教师评选</text>
<text x="99" y="74.8" font-size="5.6" fill="#fff" font-weight="bold" text-anchor="middle" letter-spacing="0.1">2022.7.12</text>
<g font-size="6" text-anchor="middle" font-family="Liberation Sans">
<circle cx="163.6" cy="93.8" r="3.6" fill="#fff"/><text x="163.6" y="96" fill="#8a4a3a">1</text>
<circle cx="173.2" cy="93.8" r="3.6" fill="#fff"/><text x="173.2" y="96" fill="#8a4a3a">2</text>
<circle cx="182.4" cy="93.8" r="3.6" fill="#fff"/><text x="182.4" y="96" fill="#8a4a3a">3</text>
<circle cx="191.8" cy="93.8" r="3.6" fill="#fff"/><text x="191.8" y="96" fill="#333">4</text>
<circle cx="201.3" cy="93.8" r="3.6" fill="#6f93c8"/><text x="201.3" y="96" fill="#fff">5</text>
</g>
</svg></div>
<div class="ttl a" style="left:395.4px;top:186.5px">新闻速递</div>
<div class="gline" style="left:385px;top:196.9px;width:208px;"></div>
<div class="uline" style="left:385px;top:196.9px;width:48.2px"></div>
<div class="more" style="left:569px;top:188.8px;line-height:8px">More ▾</div>
<div class="nb" style="top:203.20px"><div class="w">星期三</div><div class="dt">02月22日</div></div>
<div class="nt a" style="top:207.00px">东北财经大学召开2022年校级教学改革研究项目结项<br>评审会</div>
<div class="ndot" style="top:229.80px"></div>
<div class="nb" style="top:236.80px"><div class="w">星期六</div><div class="dt">02月11日</div></div>
<div class="nt a" style="top:240.60px">东北财经大学10个项目获教育部2022年第二批产学合<br>作协同育人项目立项</div>
<div class="ndot" style="top:263.40px"></div>
<div class="nb" style="top:270.40px"><div class="w">星期二</div><div class="dt">02月07日</div></div>
<div class="nt a" style="top:274.20px">东北财经大学组织开展本科教材督导工作</div>
<div class="ndot" style="top:297.00px"></div>
<div class="nb" style="top:304.00px"><div class="w">星期三</div><div class="dt">01月11日</div></div>
<div class="nt a" style="top:307.80px">学校召开2022-2023学年第一学期第十九次本科教学<br>工作会暨高质量教材建设研讨会</div>
<div class="ndot" style="top:330.60px"></div>
<div class="nb" style="top:337.60px"><div class="w">星期四</div><div class="dt">12月22日</div></div>
<div class="nt a" style="top:341.40px">学校召开2022-2023学年第一学期第十八次本科教学<br>工作会议</div>
<div class="ndot" style="top:364.20px"></div>

<svg class="a" style="left:56.5px;top:81.3px" width="7.5" height="8" viewBox="0 0 7.5 8"><rect x="0.5" y="0.2" width="6.6" height="7.6" rx="1" fill="#1252c8"/><path d="M4.6 0.8 L4.6 3 L5.2 2.5 L5.8 3 L5.8 0.8Z" fill="#fff"/></svg>
<svg class="a" style="left:57px;top:200px" width="8" height="7.5" viewBox="0 0 8 7.5"><rect x="0" y="0" width="3.6" height="3.4" rx="0.6" fill="#1252c8"/><rect x="4.3" y="0" width="3.6" height="3.4" rx="0.6" fill="#1252c8"/><rect x="0" y="4" width="3.6" height="3.4" rx="0.6" fill="#1252c8"/><rect x="4.3" y="4" width="3.6" height="3.4" rx="0.6" fill="#1252c8"/></svg>
<svg class="a" style="left:148.3px;top:81.5px" width="9" height="6.8" viewBox="0 0 9 6.8"><path d="M0.4 2.3 L2 2.3 L3.8 0.4 L3.8 6.2 L2 4.4 L0.4 4.4Z" fill="#0f4fcc"/><path d="M5.2 0.6 Q8.4 3.3 5.2 6.1 Q6.4 3.3 5.2 0.6Z" fill="#7a9ee0"/></svg>
<svg class="a" style="left:148.3px;top:263.8px" width="8.2" height="8" viewBox="0 0 8.2 8"><path d="M2 0.3 L7.6 0.3 L6.1 7.6 L0.6 7.6 Z" fill="#1252c8"/><path d="M2.6 2 L5.8 2 L5.5 3.3 L2.3 3.3Z" fill="#8fb0ea"/></svg>
<svg class="a" style="left:384.8px;top:186.8px" width="8.2" height="8.4" viewBox="0 0 8.2 8.4"><path d="M1.6 6.3 L1.6 3.6 Q1.6 0.9 4.1 0.9 Q6.6 0.9 6.6 3.6 L6.6 6.3 L7.6 6.9 L0.6 6.9Z" fill="none" stroke="#1a55c8" stroke-width="0.8" stroke-linejoin="round"/><ellipse cx="4.1" cy="7.6" rx="1" ry="0.6" fill="#1a55c8"/></svg>

<svg class="a" style="left:64px;top:107px" width="14" height="13" viewBox="64 107 14 13">
<path d="M68.3 110.2 Q68.1 108 71.1 108 Q74.1 108 73.9 110.2 L73.9 111.6 Q73.6 114.3 71.1 114.5 Q68.6 114.3 68.3 111.6Z" fill="none" stroke="#fff" stroke-width="0.9"/>
<path d="M68.3 109.9 Q71 110.6 73.9 109.9 L73.9 108.9 Q71.1 107.4 68.3 108.9Z" fill="#fff"/>
<path d="M65.2 119.3 Q65.6 116.4 68.8 115 L71.1 116.7 L73.4 115 Q76.6 116.4 77 119.3Z" fill="#fff"/>
<path d="M70.6 116.4 L71.6 116.4 L71.9 119 L70.3 119Z" fill="#3a7fdc"/>
</svg>
<svg class="a" style="left:65px;top:135px" width="13" height="14" viewBox="65 135 13 14">
<circle cx="71.4" cy="138.3" r="2.5" fill="#fff"/>
<path d="M66.4 141.8 L70.2 141.8 Q71.4 142.8 72.6 141.8 L76.6 141.8 L76.6 147.2 L72.4 147.2 Q71.4 148 70.4 147.2 L66.4 147.2Z" fill="#fff"/>
<path d="M68.8 144.6 L74 144.6" stroke="#cfe0f7" stroke-width="0.4"/>
</svg>
<svg class="a" style="left:65px;top:164px" width="13" height="13" viewBox="65 164 13 13">
<path d="M67.3 167.5 L67.3 165.6 L75.8 165.6 L75.8 175.2 L67.3 175.2 L67.3 173.2" fill="none" stroke="#fff" stroke-width="1.2"/>
<path d="M66 170.3 L72.8 170.3" stroke="#fff" stroke-width="1.1"/>
<path d="M71.2 168.6 L73.6 170.3 L71.2 172" fill="none" stroke="#fff" stroke-width="0.9"/>
</svg>
<svg class="a" style="left:65px;top:224px" width="13" height="13" viewBox="65 224 13 13">
<rect x="66.1" y="225.4" width="8.5" height="9.6" rx="0.6" fill="#fff"/>
<path d="M67.6 227.3 L71.8 227.3 M67.6 228.5 L67.6 229.6" stroke="#b5e6dc" stroke-width="0.6"/>
<circle cx="73.7" cy="232.6" r="3.2" fill="#fff"/>
<circle cx="73.7" cy="232.6" r="2.2" fill="#41c7b3"/>
<path d="M73.4 231.4 L73.4 232.9 L74.6 233.6" fill="none" stroke="#fff" stroke-width="0.6"/>
</svg>
<svg class="a" style="left:64px;top:249px" width="13" height="14" viewBox="64 249 13 14">
<path d="M67.5 252.3 L71.7 251.2 L74 253.4 L72.8 258 L68 260.8 L65.8 258.4Z" fill="#fff"/>
<path d="M70.1 250.4 L74.8 253" stroke="#fff" stroke-width="1.2" stroke-linecap="round"/>
<circle cx="69.3" cy="257" r="1" fill="#41c7b3"/>
<path d="M70.7 261.9 L76 261.9" stroke="#d8f3ee" stroke-width="0.9"/>
</svg>
<svg class="a" style="left:64px;top:276px" width="13" height="12" viewBox="64 276 13 12">
<rect x="67.9" y="277" width="8.3" height="9.8" fill="#fff"/>
<rect x="65.1" y="280.4" width="1.9" height="6.4" fill="#fff"/>
<path d="M69.8 279.8 L74.6 279.8 M69.8 282.6 L72.8 282.6" stroke="#3fc3b0" stroke-width="0.9"/>
</svg>
<svg class="a" style="left:64px;top:301px" width="14" height="12" viewBox="64 301 14 12">
<path d="M65.1 302.9 L70.6 302.9 L71.6 304.3 L76.9 304.3 L76.9 312 L65.1 312Z" fill="#fff"/>
<ellipse cx="71.3" cy="308.2" rx="1" ry="1.3" fill="#41c7b3"/>
</svg>
<!--LIST-->
<div class="li" style="top:93.70px"><svg class="c" width="3" height="5" viewBox="0 0 3 5"><path d="M0.6 0.4 L2.3 2.2 L0.6 4" fill="none" stroke="#6a6a6a" stroke-width="0.7"/></svg><span class="t">关于做好2022-2023学年第二学期补退选工作的通知</span><span class="d">2023-02-24</span></div>
<div class="dot" style="top:111.70px"></div>
<div class="li" style="top:113.15px"><svg class="c" width="3" height="5" viewBox="0 0 3 5"><path d="M0.6 0.4 L2.3 2.2 L0.6 4" fill="none" stroke="#6a6a6a" stroke-width="0.7"/></svg><span class="t">关于组织白果云平台过程化考核功能使用培训的通知</span><span class="d">2023-02-23</span></div>
<div class="dot" style="top:131.15px"></div>
<div class="li" style="top:132.60px"><svg class="c" width="3" height="5" viewBox="0 0 3 5"><path d="M0.6 0.4 L2.3 2.2 L0.6 4" fill="none" stroke="#6a6a6a" stroke-width="0.7"/></svg><span class="t">关于2022-2023学年第二学期复查试卷的通知</span><span class="d">2023-02-23</span></div>
<div class="dot" style="top:150.60px"></div>
<div class="li" style="top:152.05px"><svg class="c" width="3" height="5" viewBox="0 0 3 5"><path d="M0.6 0.4 L2.3 2.2 L0.6 4" fill="none" stroke="#6a6a6a" stroke-width="0.7"/></svg><span class="t">关于公布2022年度校级教学改革研究项目结项验收结果的通知</span><span class="d">2023-02-22</span></div>
<div class="dot" style="top:170.05px"></div>
<div class="li" style="top:171.50px"><svg class="c" width="3" height="5" viewBox="0 0 3 5"><path d="M0.6 0.4 L2.3 2.2 L0.6 4" fill="none" stroke="#6a6a6a" stroke-width="0.7"/></svg><span class="t">关于2022年下半年全国大学英语四、六级考试成绩查询的通知</span><span class="d">2023-02-21</span></div>
<div class="dot" style="top:189.50px"></div>
<div class="li" style="top:190.95px"><svg class="c" width="3" height="5" viewBox="0 0 3 5"><path d="M0.6 0.4 L2.3 2.2 L0.6 4" fill="none" stroke="#6a6a6a" stroke-width="0.7"/></svg><span class="t">关于2022年下半年全国大学英语四、六级考试加考有关工作安...</span><span class="d">2023-02-20</span></div>
<div class="dot" style="top:208.95px"></div>
<div class="li" style="top:210.40px"><svg class="c" width="3" height="5" viewBox="0 0 3 5"><path d="M0.6 0.4 L2.3 2.2 L0.6 4" fill="none" stroke="#6a6a6a" stroke-width="0.7"/></svg><span class="t">关于开展2023年3月全国计算机等级考试报名工作的通知</span><span class="d">2023-02-20</span></div>
<div class="dot" style="top:228.40px"></div>
<div class="li" style="top:229.85px"><svg class="c" width="3" height="5" viewBox="0 0 3 5"><path d="M0.6 0.4 L2.3 2.2 L0.6 4" fill="none" stroke="#6a6a6a" stroke-width="0.7"/></svg><span class="t">2022-2023学年第二学期混合式教学开课通知</span><span class="d">2023-02-20</span></div>
<div class="dot" style="top:247.85px"></div>
<div class="li" style="top:276.10px"><svg class="c" width="3" height="5" viewBox="0 0 3 5"><path d="M0.6 0.4 L2.3 2.2 L0.6 4" fill="none" stroke="#6a6a6a" stroke-width="0.7"/></svg><span class="t">关于组织双语教师资格认定的通知</span><span class="d">2023-02-24</span></div>
<div class="dot" style="top:294.10px"></div>
<div class="li" style="top:295.35px"><svg class="c" width="3" height="5" viewBox="0 0 3 5"><path d="M0.6 0.4 L2.3 2.2 L0.6 4" fill="none" stroke="#6a6a6a" stroke-width="0.7"/></svg><span class="t">2022-2023学年第二学期正选超删除课程信息公示</span><span class="d">2023-01-05</span></div>
<div class="dot" style="top:313.35px"></div>
<div class="li" style="top:314.60px"><svg class="c" width="3" height="5" viewBox="0 0 3 5"><path d="M0.6 0.4 L2.3 2.2 L0.6 4" fill="none" stroke="#6a6a6a" stroke-width="0.7"/></svg><span class="t">2023 年辽宁省高校教师教学创新大赛拟推荐参赛名单公示</span><span class="d">2022-12-04</span></div>
<div class="dot" style="top:332.60px"></div>
<div class="li" style="top:333.85px"><svg class="c" width="3" height="5" viewBox="0 0 3 5"><path d="M0.6 0.4 L2.3 2.2 L0.6 4" fill="none" stroke="#6a6a6a" stroke-width="0.7"/></svg><span class="t">关于举办东北财经大学第二届教师教学创新大赛的通知</span><span class="d">2022-10-19</span></div>
<div class="dot" style="top:351.85px"></div>
<div class="li" style="top:353.10px"><svg class="c" width="3" height="5" viewBox="0 0 3 5"><path d="M0.6 0.4 L2.3 2.2 L0.6 4" fill="none" stroke="#6a6a6a" stroke-width="0.7"/></svg><span class="t">关于第二届青教赛复赛拟推荐名单的公示</span><span class="d">2022-10-09</span></div>
<div class="dot" style="top:371.10px"></div>
<!--/LIST-->
<div id="foot"></div>
<div class="fh" style="left:98.5px;top:391.7px">友情链接</div>
<div class="fh" style="left:98.5px;top:406.8px">联系方式</div>
<div class="ft" style="left:147.4px;top:391.7px">教育部</div>
<div class="ft" style="left:190px;top:391.7px">辽宁省教育厅</div>
<div class="ft" style="left:250.8px;top:391.7px">辽宁省本科教学网</div>
<div class="ft" style="left:326.2px;top:391.7px">东北财经大学</div>
<div class="ft" style="left:387px;top:391.7px">创新创业教育服务</div>
<div class="ft" style="left:147.4px;top:406.6px">地址：中国·辽宁·大连市沙河口区尖山街217号</div>
<div class="ft" style="left:297px;top:406.6px">邮编：116025</div>
<div class="ft" style="left:351.4px;top:406.6px">邮箱：jwc@dufe.edu.cn</div>
<div class="a" style="left:453px;top:384.5px;width:33px;height:32.5px;background:#fff"></div>
<svg class="a" style="left:455px;top:386.2px" width="29.2" height="29.2" viewBox="0 0 29.2 29.2"><path d="M0.00 0.00h0.90v0.90h-0.90zM0.88 0.00h0.90v0.90h-0.90zM1.77 0.00h0.90v0.90h-0.90zM2.65 0.00h0.90v0.90h-0.90zM3.54 0.00h0.90v0.90h-0.90zM4.42 0.00h0.90v0.90h-0.90zM5.31 0.00h0.90v0.90h-0.90zM8.85 0.00h0.90v0.90h-0.90zM9.73 0.00h0.90v0.90h-0.90zM10.62 0.00h0.90v0.90h-0.90zM13.27 0.00h0.90v0.90h-0.90zM17.70 0.00h0.90v0.90h-0.90zM18.58 0.00h0.90v0.90h-0.90zM20.35 0.00h0.90v0.90h-0.90zM21.24 0.00h0.90v0.90h-0.90zM23.01 0.00h0.90v0.90h-0.90zM23.89 0.00h0.90v0.90h-0.90zM24.78 0.00h0.90v0.90h-0.90zM25.66 0.00h0.90v0.90h-0.90zM26.55 0.00h0.90v0.90h-0.90zM27.43 0.00h0.90v0.90h-0.90zM28.32 0.00h0.90v0.90h-0.90zM0.00 0.88h0.90v0.90h-0.90zM5.31 0.88h0.90v0.90h-0.90zM7.08 0.88h0.90v0.90h-0.90zM7.96 0.88h0.90v0.90h-0.90zM8.85 0.88h0.90v0.90h-0.90zM10.62 0.88h0.90v0.90h-0.90zM12.39 0.88h0.90v0.90h-0.90zM15.04 0.88h0.90v0.90h-0.90zM15.93 0.88h0.90v0.90h-0.90zM17.70 0.88h0.90v0.90h-0.90zM19.47 0.88h0.90v0.90h-0.90zM20.35 0.88h0.90v0.90h-0.90zM23.01 0.88h0.90v0.90h-0.90zM28.32 0.88h0.90v0.90h-0.90zM0.00 1.77h0.90v0.90h-0.90zM1.77 1.77h0.90v0.90h-0.90zM2.65 1.77h0.90v0.90h-0.90zM3.54 1.77h0.90v0.90h-0.90zM5.31 1.77h0.90v0.90h-0.90zM7.08 1.77h0.90v0.90h-0.90zM8.85 1.77h0.90v0.90h-0.90zM9.73 1.77h0.90v0.90h-0.90zM10.62 1.77h0.90v0.90h-0.90zM11.50 1.77h0.90v0.90h-0.90zM14.16 1.77h0.90v0.90h-0.90zM15.93 1.77h0.90v0.90h-0.90zM16.81 1.77h0.90v0.90h-0.90zM19.47 1.77h0.90v0.90h-0.90zM21.24 1.77h0.90v0.90h-0.90zM23.01 1.77h0.90v0.90h-0.90zM24.78 1.77h0.90v0.90h-0.90zM25.66 1.77h0.90v0.90h-0.90zM26.55 1.77h0.90v0.90h-0.90zM28.32 1.77h0.90v0.90h-0.90zM0.00 2.65h0.90v0.90h-0.90zM1.77 2.65h0.90v0.90h-0.90zM2.65 2.65h0.90v0.90h-0.90zM3.54 2.65h0.90v0.90h-0.90zM5.31 2.65h0.90v0.90h-0.90zM7.08 2.65h0.90v0.90h-0.90zM9.73 2.65h0.90v0.90h-0.90zM10.62 2.65h0.90v0.90h-0.90zM13.27 2.65h0.90v0.90h-0.90zM16.81 2.65h0.90v0.90h-0.90zM17.70 2.65h0.90v0.90h-0.90zM18.58 2.65h0.90v0.90h-0.90zM20.35 2.65h0.90v0.90h-0.90zM23.01 2.65h0.90v0.90h-0.90zM24.78 2.65h0.90v0.90h-0.90zM25.66 2.65h0.90v0.90h-0.90zM26.55 2.65h0.90v0.90h-0.90zM28.32 2.65h0.90v0.90h-0.90zM0.00 3.54h0.90v0.90h-0.90zM1.77 3.54h0.90v0.90h-0.90zM2.65 3.54h0.90v0.90h-0.90zM3.54 3.54h0.90v0.90h-0.90zM5.31 3.54h0.90v0.90h-0.90zM7.08 3.54h0.90v0.90h-0.90zM7.96 3.54h0.90v0.90h-0.90zM8.85 3.54h0.90v0.90h-0.90zM9.73 3.54h0.90v0.90h-0.90zM11.50 3.54h0.90v0.90h-0.90zM12.39 3.54h0.90v0.90h-0.90zM17.70 3.54h0.90v0.90h-0.90zM18.58 3.54h0.90v0.90h-0.90zM19.47 3.54h0.90v0.90h-0.90zM23.01 3.54h0.90v0.90h-0.90zM24.78 3.54h0.90v0.90h-0.90zM25.66 3.54h0.90v0.90h-0.90zM26.55 3.54h0.90v0.90h-0.90zM28.32 3.54h0.90v0.90h-0.90zM0.00 4.42h0.90v0.90h-0.90zM5.31 4.42h0.90v0.90h-0.90zM9.73 4.42h0.90v0.90h-0.90zM14.16 4.42h0.90v0.90h-0.90zM16.81 4.42h0.90v0.90h-0.90zM21.24 4.42h0.90v0.90h-0.90zM23.01 4.42h0.90v0.90h-0.90zM28.32 4.42h0.90v0.90h-0.90zM0.00 5.31h0.90v0.90h-0.90zM0.88 5.31h0.90v0.90h-0.90zM1.77 5.31h0.90v0.90h-0.90zM2.65 5.31h0.90v0.90h-0.90zM3.54 5.31h0.90v0.90h-0.90zM4.42 5.31h0.90v0.90h-0.90zM5.31 5.31h0.90v0.90h-0.90zM7.08 5.31h0.90v0.90h-0.90zM8.85 5.31h0.90v0.90h-0.90zM9.73 5.31h0.90v0.90h-0.90zM12.39 5.31h0.90v0.90h-0.90zM14.16 5.31h0.90v0.90h-0.90zM15.93 5.31h0.90v0.90h-0.90zM16.81 5.31h0.90v0.90h-0.90zM20.35 5.31h0.90v0.90h-0.90zM23.01 5.31h0.90v0.90h-0.90zM23.89 5.31h0.90v0.90h-0.90zM24.78 5.31h0.90v0.90h-0.90zM25.66 5.31h0.90v0.90h-0.90zM26.55 5.31h0.90v0.90h-0.90zM27.43 5.31h0.90v0.90h-0.90zM28.32 5.31h0.90v0.90h-0.90zM8.85 6.19h0.90v0.90h-0.90zM9.73 6.19h0.90v0.90h-0.90zM10.62 6.19h0.90v0.90h-0.90zM12.39 6.19h0.90v0.90h-0.90zM15.04 6.19h0.90v0.90h-0.90zM16.81 6.19h0.90v0.90h-0.90zM17.70 6.19h0.90v0.90h-0.90zM18.58 6.19h0.90v0.90h-0.90zM19.47 6.19h0.90v0.90h-0.90zM21.24 6.19h0.90v0.90h-0.90zM0.88 7.08h0.90v0.90h-0.90zM1.77 7.08h0.90v0.90h-0.90zM2.65 7.08h0.90v0.90h-0.90zM3.54 7.08h0.90v0.90h-0.90zM4.42 7.08h0.90v0.90h-0.90zM6.19 7.08h0.90v0.90h-0.90zM7.08 7.08h0.90v0.90h-0.90zM7.96 7.08h0.90v0.90h-0.90zM12.39 7.08h0.90v0.90h-0.90zM15.04 7.08h0.90v0.90h-0.90zM17.70 7.08h0.90v0.90h-0.90zM18.58 7.08h0.90v0.90h-0.90zM21.24 7.08h0.90v0.90h-0.90zM25.66 7.08h0.90v0.90h-0.90zM27.43 7.08h0.90v0.90h-0.90zM2.65 7.96h0.90v0.90h-0.90zM7.96 7.96h0.90v0.90h-0.90zM10.62 7.96h0.90v0.90h-0.90zM11.50 7.96h0.90v0.90h-0.90zM12.39 7.96h0.90v0.90h-0.90zM15.04 7.96h0.90v0.90h-0.90zM15.93 7.96h0.90v0.90h-0.90zM17.70 7.96h0.90v0.90h-0.90zM19.47 7.96h0.90v0.90h-0.90zM20.35 7.96h0.90v0.90h-0.90zM22.12 7.96h0.90v0.90h-0.90zM23.01 7.96h0.90v0.90h-0.90zM28.32 7.96h0.90v0.90h-0.90zM0.88 8.85h0.90v0.90h-0.90zM1.77 8.85h0.90v0.90h-0.90zM3.54 8.85h0.90v0.90h-0.90zM8.85 8.85h0.90v0.90h-0.90zM9.73 8.85h0.90v0.90h-0.90zM12.39 8.85h0.90v0.90h-0.90zM16.81 8.85h0.90v0.90h-0.90zM20.35 8.85h0.90v0.90h-0.90zM23.01 8.85h0.90v0.90h-0.90zM25.66 8.85h0.90v0.90h-0.90zM27.43 8.85h0.90v0.90h-0.90zM0.00 9.73h0.90v0.90h-0.90zM2.65 9.73h0.90v0.90h-0.90zM3.54 9.73h0.90v0.90h-0.90zM4.42 9.73h0.90v0.90h-0.90zM5.31 9.73h0.90v0.90h-0.90zM7.96 9.73h0.90v0.90h-0.90zM8.85 9.73h0.90v0.90h-0.90zM9.73 9.73h0.90v0.90h-0.90zM12.39 9.73h0.90v0.90h-0.90zM14.16 9.73h0.90v0.90h-0.90zM15.04 9.73h0.90v0.90h-0.90zM15.93 9.73h0.90v0.90h-0.90zM17.70 9.73h0.90v0.90h-0.90zM18.58 9.73h0.90v0.90h-0.90zM20.35 9.73h0.90v0.90h-0.90zM22.12 9.73h0.90v0.90h-0.90zM23.89 9.73h0.90v0.90h-0.90zM24.78 9.73h0.90v0.90h-0.90zM26.55 9.73h0.90v0.90h-0.90zM27.43 9.73h0.90v0.90h-0.90zM28.32 9.73h0.90v0.90h-0.90zM0.88 10.62h0.90v0.90h-0.90zM1.77 10.62h0.90v0.90h-0.90zM7.96 10.62h0.90v0.90h-0.90zM11.50 10.62h0.90v0.90h-0.90zM12.39 10.62h0.90v0.90h-0.90zM14.16 10.62h0.90v0.90h-0.90zM16.81 10.62h0.90v0.90h-0.90zM17.70 10.62h0.90v0.90h-0.90zM19.47 10.62h0.90v0.90h-0.90zM20.35 10.62h0.90v0.90h-0.90zM22.12 10.62h0.90v0.90h-0.90zM23.89 10.62h0.90v0.90h-0.90zM24.78 10.62h0.90v0.90h-0.90zM26.55 10.62h0.90v0.90h-0.90zM27.43 10.62h0.90v0.90h-0.90zM1.77 11.50h0.90v0.90h-0.90zM6.19 11.50h0.90v0.90h-0.90zM7.08 11.50h0.90v0.90h-0.90zM7.96 11.50h0.90v0.90h-0.90zM8.85 11.50h0.90v0.90h-0.90zM12.39 11.50h0.90v0.90h-0.90zM13.27 11.50h0.90v0.90h-0.90zM14.16 11.50h0.90v0.90h-0.90zM17.70 11.50h0.90v0.90h-0.90zM18.58 11.50h0.90v0.90h-0.90zM20.35 11.50h0.90v0.90h-0.90zM22.12 11.50h0.90v0.90h-0.90zM23.01 11.50h0.90v0.90h-0.90zM24.78 11.50h0.90v0.90h-0.90zM26.55 11.50h0.90v0.90h-0.90zM0.00 12.39h0.90v0.90h-0.90zM0.88 12.39h0.90v0.90h-0.90zM2.65 12.39h0.90v0.90h-0.90zM3.54 12.39h0.90v0.90h-0.90zM4.42 12.39h0.90v0.90h-0.90zM6.19 12.39h0.90v0.90h-0.90zM11.50 12.39h0.90v0.90h-0.90zM15.93 12.39h0.90v0.90h-0.90zM20.35 12.39h0.90v0.90h-0.90zM25.66 12.39h0.90v0.90h-0.90zM27.43 12.39h0.90v0.90h-0.90zM28.32 12.39h0.90v0.90h-0.90zM0.00 13.27h0.90v0.90h-0.90zM0.88 13.27h0.90v0.90h-0.90zM1.77 13.27h0.90v0.90h-0.90zM4.42 13.27h0.90v0.90h-0.90zM7.08 13.27h0.90v0.90h-0.90zM10.62 13.27h0.90v0.90h-0.90zM15.93 13.27h0.90v0.90h-0.90zM18.58 13.27h0.90v0.90h-0.90zM19.47 13.27h0.90v0.90h-0.90zM20.35 13.27h0.90v0.90h-0.90zM21.24 13.27h0.90v0.90h-0.90zM22.12 13.27h0.90v0.90h-0.90zM23.01 13.27h0.90v0.90h-0.90zM23.89 13.27h0.90v0.90h-0.90zM2.65 14.16h0.90v0.90h-0.90zM5.31 14.16h0.90v0.90h-0.90zM7.08 14.16h0.90v0.90h-0.90zM7.96 14.16h0.90v0.90h-0.90zM8.85 14.16h0.90v0.90h-0.90zM9.73 14.16h0.90v0.90h-0.90zM11.50 14.16h0.90v0.90h-0.90zM13.27 14.16h0.90v0.90h-0.90zM15.93 14.16h0.90v0.90h-0.90zM16.81 14.16h0.90v0.90h-0.90zM19.47 14.16h0.90v0.90h-0.90zM21.24 14.16h0.90v0.90h-0.90zM22.12 14.16h0.90v0.90h-0.90zM23.01 14.16h0.90v0.90h-0.90zM23.89 14.16h0.90v0.90h-0.90zM24.78 14.16h0.90v0.90h-0.90zM26.55 14.16h0.90v0.90h-0.90zM0.00 15.04h0.90v0.90h-0.90zM2.65 15.04h0.90v0.90h-0.90zM4.42 15.04h0.90v0.90h-0.90zM5.31 15.04h0.90v0.90h-0.90zM7.08 15.04h0.90v0.90h-0.90zM10.62 15.04h0.90v0.90h-0.90zM14.16 15.04h0.90v0.90h-0.90zM15.93 15.04h0.90v0.90h-0.90zM16.81 15.04h0.90v0.90h-0.90zM17.70 15.04h0.90v0.90h-0.90zM19.47 15.04h0.90v0.90h-0.90zM20.35 15.04h0.90v0.90h-0.90zM22.12 15.04h0.90v0.90h-0.90zM23.01 15.04h0.90v0.90h-0.90zM24.78 15.04h0.90v0.90h-0.90zM0.88 15.93h0.90v0.90h-0.90zM1.77 15.93h0.90v0.90h-0.90zM5.31 15.93h0.90v0.90h-0.90zM6.19 15.93h0.90v0.90h-0.90zM11.50 15.93h0.90v0.90h-0.90zM12.39 15.93h0.90v0.90h-0.90zM15.93 15.93h0.90v0.90h-0.90zM16.81 15.93h0.90v0.90h-0.90zM17.70 15.93h0.90v0.90h-0.90zM18.58 15.93h0.90v0.90h-0.90zM20.35 15.93h0.90v0.90h-0.90zM22.12 15.93h0.90v0.90h-0.90zM23.01 15.93h0.90v0.90h-0.90zM26.55 15.93h0.90v0.90h-0.90zM27.43 15.93h0.90v0.90h-0.90zM28.32 15.93h0.90v0.90h-0.90zM0.00 16.81h0.90v0.90h-0.90zM2.65 16.81h0.90v0.90h-0.90zM3.54 16.81h0.90v0.90h-0.90zM7.08 16.81h0.90v0.90h-0.90zM7.96 16.81h0.90v0.90h-0.90zM8.85 16.81h0.90v0.90h-0.90zM10.62 16.81h0.90v0.90h-0.90zM13.27 16.81h0.90v0.90h-0.90zM16.81 16.81h0.90v0.90h-0.90zM17.70 16.81h0.90v0.90h-0.90zM18.58 16.81h0.90v0.90h-0.90zM20.35 16.81h0.90v0.90h-0.90zM21.24 16.81h0.90v0.90h-0.90zM23.01 16.81h0.90v0.90h-0.90zM24.78 16.81h0.90v0.90h-0.90zM26.55 16.81h0.90v0.90h-0.90zM27.43 16.81h0.90v0.90h-0.90zM0.00 17.70h0.90v0.90h-0.90zM0.88 17.70h0.90v0.90h-0.90zM3.54 17.70h0.90v0.90h-0.90zM4.42 17.70h0.90v0.90h-0.90zM5.31 17.70h0.90v0.90h-0.90zM7.08 17.70h0.90v0.90h-0.90zM7.96 17.70h0.90v0.90h-0.90zM13.27 17.70h0.90v0.90h-0.90zM15.04 17.70h0.90v0.90h-0.90zM15.93 17.70h0.90v0.90h-0.90zM16.81 17.70h0.90v0.90h-0.90zM19.47 17.70h0.90v0.90h-0.90zM20.35 17.70h0.90v0.90h-0.90zM21.24 17.70h0.90v0.90h-0.90zM22.12 17.70h0.90v0.90h-0.90zM23.01 17.70h0.90v0.90h-0.90zM23.89 17.70h0.90v0.90h-0.90zM24.78 17.70h0.90v0.90h-0.90zM0.88 18.58h0.90v0.90h-0.90zM3.54 18.58h0.90v0.90h-0.90zM4.42 18.58h0.90v0.90h-0.90zM10.62 18.58h0.90v0.90h-0.90zM13.27 18.58h0.90v0.90h-0.90zM14.16 18.58h0.90v0.90h-0.90zM16.81 18.58h0.90v0.90h-0.90zM18.58 18.58h0.90v0.90h-0.90zM21.24 18.58h0.90v0.90h-0.90zM22.12 18.58h0.90v0.90h-0.90zM25.66 18.58h0.90v0.90h-0.90zM26.55 18.58h0.90v0.90h-0.90zM0.00 19.47h0.90v0.90h-0.90zM4.42 19.47h0.90v0.90h-0.90zM15.04 19.47h0.90v0.90h-0.90zM15.93 19.47h0.90v0.90h-0.90zM16.81 19.47h0.90v0.90h-0.90zM19.47 19.47h0.90v0.90h-0.90zM20.35 19.47h0.90v0.90h-0.90zM21.24 19.47h0.90v0.90h-0.90zM22.12 19.47h0.90v0.90h-0.90zM23.01 19.47h0.90v0.90h-0.90zM24.78 19.47h0.90v0.90h-0.90zM25.66 19.47h0.90v0.90h-0.90zM26.55 19.47h0.90v0.90h-0.90zM0.00 20.35h0.90v0.90h-0.90zM0.88 20.35h0.90v0.90h-0.90zM1.77 20.35h0.90v0.90h-0.90zM4.42 20.35h0.90v0.90h-0.90zM5.31 20.35h0.90v0.90h-0.90zM6.19 20.35h0.90v0.90h-0.90zM7.08 20.35h0.90v0.90h-0.90zM7.96 20.35h0.90v0.90h-0.90zM10.62 20.35h0.90v0.90h-0.90zM11.50 20.35h0.90v0.90h-0.90zM12.39 20.35h0.90v0.90h-0.90zM13.27 20.35h0.90v0.90h-0.90zM15.04 20.35h0.90v0.90h-0.90zM17.70 20.35h0.90v0.90h-0.90zM18.58 20.35h0.90v0.90h-0.90zM21.24 20.35h0.90v0.90h-0.90zM23.89 20.35h0.90v0.90h-0.90zM24.78 20.35h0.90v0.90h-0.90zM25.66 20.35h0.90v0.90h-0.90zM28.32 20.35h0.90v0.90h-0.90zM1.77 21.24h0.90v0.90h-0.90zM4.42 21.24h0.90v0.90h-0.90zM5.31 21.24h0.90v0.90h-0.90zM6.19 21.24h0.90v0.90h-0.90zM7.08 21.24h0.90v0.90h-0.90zM10.62 21.24h0.90v0.90h-0.90zM11.50 21.24h0.90v0.90h-0.90zM12.39 21.24h0.90v0.90h-0.90zM13.27 21.24h0.90v0.90h-0.90zM17.70 21.24h0.90v0.90h-0.90zM19.47 21.24h0.90v0.90h-0.90zM21.24 21.24h0.90v0.90h-0.90zM24.78 21.24h0.90v0.90h-0.90zM25.66 21.24h0.90v0.90h-0.90zM27.43 21.24h0.90v0.90h-0.90zM28.32 21.24h0.90v0.90h-0.90zM7.08 22.12h0.90v0.90h-0.90zM8.85 22.12h0.90v0.90h-0.90zM11.50 22.12h0.90v0.90h-0.90zM13.27 22.12h0.90v0.90h-0.90zM14.16 22.12h0.90v0.90h-0.90zM15.04 22.12h0.90v0.90h-0.90zM15.93 22.12h0.90v0.90h-0.90zM16.81 22.12h0.90v0.90h-0.90zM18.58 22.12h0.90v0.90h-0.90zM20.35 22.12h0.90v0.90h-0.90zM21.24 22.12h0.90v0.90h-0.90zM22.12 22.12h0.90v0.90h-0.90zM25.66 22.12h0.90v0.90h-0.90zM26.55 22.12h0.90v0.90h-0.90zM28.32 22.12h0.90v0.90h-0.90zM0.00 23.01h0.90v0.90h-0.90zM0.88 23.01h0.90v0.90h-0.90zM1.77 23.01h0.90v0.90h-0.90zM2.65 23.01h0.90v0.90h-0.90zM3.54 23.01h0.90v0.90h-0.90zM4.42 23.01h0.90v0.90h-0.90zM5.31 23.01h0.90v0.90h-0.90zM7.08 23.01h0.90v0.90h-0.90zM8.85 23.01h0.90v0.90h-0.90zM9.73 23.01h0.90v0.90h-0.90zM10.62 23.01h0.90v0.90h-0.90zM12.39 23.01h0.90v0.90h-0.90zM13.27 23.01h0.90v0.90h-0.90zM15.04 23.01h0.90v0.90h-0.90zM18.58 23.01h0.90v0.90h-0.90zM20.35 23.01h0.90v0.90h-0.90zM21.24 23.01h0.90v0.90h-0.90zM22.12 23.01h0.90v0.90h-0.90zM24.78 23.01h0.90v0.90h-0.90zM25.66 23.01h0.90v0.90h-0.90zM28.32 23.01h0.90v0.90h-0.90zM0.00 23.89h0.90v0.90h-0.90zM5.31 23.89h0.90v0.90h-0.90zM9.73 23.89h0.90v0.90h-0.90zM10.62 23.89h0.90v0.90h-0.90zM11.50 23.89h0.90v0.90h-0.90zM12.39 23.89h0.90v0.90h-0.90zM13.27 23.89h0.90v0.90h-0.90zM18.58 23.89h0.90v0.90h-0.90zM19.47 23.89h0.90v0.90h-0.90zM20.35 23.89h0.90v0.90h-0.90zM22.12 23.89h0.90v0.90h-0.90zM23.01 23.89h0.90v0.90h-0.90zM27.43 23.89h0.90v0.90h-0.90zM0.00 24.78h0.90v0.90h-0.90zM1.77 24.78h0.90v0.90h-0.90zM2.65 24.78h0.90v0.90h-0.90zM3.54 24.78h0.90v0.90h-0.90zM5.31 24.78h0.90v0.90h-0.90zM8.85 24.78h0.90v0.90h-0.90zM11.50 24.78h0.90v0.90h-0.90zM12.39 24.78h0.90v0.90h-0.90zM13.27 24.78h0.90v0.90h-0.90zM15.93 24.78h0.90v0.90h-0.90zM17.70 24.78h0.90v0.90h-0.90zM18.58 24.78h0.90v0.90h-0.90zM19.47 24.78h0.90v0.90h-0.90zM21.24 24.78h0.90v0.90h-0.90zM25.66 24.78h0.90v0.90h-0.90zM0.00 25.66h0.90v0.90h-0.90zM1.77 25.66h0.90v0.90h-0.90zM2.65 25.66h0.90v0.90h-0.90zM3.54 25.66h0.90v0.90h-0.90zM5.31 25.66h0.90v0.90h-0.90zM7.08 25.66h0.90v0.90h-0.90zM8.85 25.66h0.90v0.90h-0.90zM9.73 25.66h0.90v0.90h-0.90zM10.62 25.66h0.90v0.90h-0.90zM14.16 25.66h0.90v0.90h-0.90zM16.81 25.66h0.90v0.90h-0.90zM19.47 25.66h0.90v0.90h-0.90zM20.35 25.66h0.90v0.90h-0.90zM21.24 25.66h0.90v0.90h-0.90zM22.12 25.66h0.90v0.90h-0.90zM23.01 25.66h0.90v0.90h-0.90zM24.78 25.66h0.90v0.90h-0.90zM26.55 25.66h0.90v0.90h-0.90zM28.32 25.66h0.90v0.90h-0.90zM0.00 26.55h0.90v0.90h-0.90zM1.77 26.55h0.90v0.90h-0.90zM2.65 26.55h0.90v0.90h-0.90zM3.54 26.55h0.90v0.90h-0.90zM5.31 26.55h0.90v0.90h-0.90zM10.62 26.55h0.90v0.90h-0.90zM14.16 26.55h0.90v0.90h-0.90zM15.04 26.55h0.90v0.90h-0.90zM19.47 26.55h0.90v0.90h-0.90zM21.24 26.55h0.90v0.90h-0.90zM22.12 26.55h0.90v0.90h-0.90zM27.43 26.55h0.90v0.90h-0.90zM0.00 27.43h0.90v0.90h-0.90zM5.31 27.43h0.90v0.90h-0.90zM7.08 27.43h0.90v0.90h-0.90zM7.96 27.43h0.90v0.90h-0.90zM8.85 27.43h0.90v0.90h-0.90zM9.73 27.43h0.90v0.90h-0.90zM10.62 27.43h0.90v0.90h-0.90zM15.04 27.43h0.90v0.90h-0.90zM16.81 27.43h0.90v0.90h-0.90zM20.35 27.43h0.90v0.90h-0.90zM22.12 27.43h0.90v0.90h-0.90zM24.78 27.43h0.90v0.90h-0.90zM25.66 27.43h0.90v0.90h-0.90zM26.55 27.43h0.90v0.90h-0.90zM27.43 27.43h0.90v0.90h-0.90zM28.32 27.43h0.90v0.90h-0.90zM0.00 28.32h0.90v0.90h-0.90zM0.88 28.32h0.90v0.90h-0.90zM1.77 28.32h0.90v0.90h-0.90zM2.65 28.32h0.90v0.90h-0.90zM3.54 28.32h0.90v0.90h-0.90zM4.42 28.32h0.90v0.90h-0.90zM5.31 28.32h0.90v0.90h-0.90zM7.08 28.32h0.90v0.90h-0.90zM7.96 28.32h0.90v0.90h-0.90zM10.62 28.32h0.90v0.90h-0.90zM11.50 28.32h0.90v0.90h-0.90zM12.39 28.32h0.90v0.90h-0.90zM15.04 28.32h0.90v0.90h-0.90zM16.81 28.32h0.90v0.90h-0.90zM17.70 28.32h0.90v0.90h-0.90zM18.58 28.32h0.90v0.90h-0.90zM21.24 28.32h0.90v0.90h-0.90zM23.01 28.32h0.90v0.90h-0.90zM24.78 28.32h0.90v0.90h-0.90zM25.66 28.32h0.90v0.90h-0.90zM27.43 28.32h0.90v0.90h-0.90z" fill="#1a1a1a"/><rect x="11.6" y="11.6" width="6" height="6" fill="#f2f6f8"/><circle cx="14.6" cy="14.6" r="1.8" fill="#b8ccd6"/></svg>
<div class="a" style="left:496.2px;top:398.4px;width:0;height:0;border-top:2.9px solid transparent;border-bottom:2.9px solid transparent;border-right:3.8px solid #fff"></div>
<div class="ft" style="left:504px;top:397.5px;color:#fff">教务处二维码</div>
<svg class="a" style="left:183px;top:432px" width="10" height="7" viewBox="0 0 10 7"><rect x="0.3" y="0.6" width="8.6" height="5.6" fill="#d6d6d6"/><rect x="1.3" y="1.6" width="3" height="3.6" fill="#e8e8e8"/></svg>
<div class="bt" style="left:193.6px;top:431.5px;color:#8a8a8a">网站声明</div>
<div class="bt" style="left:227.6px;top:431.5px;color:#aaa">|</div>
<svg class="a" style="left:241.5px;top:431px" width="8.4" height="9.6" viewBox="0 0 8.4 9.6"><ellipse cx="4.2" cy="5.2" rx="4" ry="4.3" fill="#e8b43a"/><ellipse cx="4.2" cy="4.6" rx="3" ry="3.3" fill="#c8301e"/><circle cx="4.2" cy="4.2" r="1.3" fill="#f2c840"/></svg>
<div class="bt" style="left:250.4px;top:431.5px;color:#444">辽公网安备 21020402000199号</div>
<div class="bt" style="left:342.5px;top:431.5px;color:#aaa">|</div>
<div class="bt" style="left:355.9px;top:431.5px;color:#9a9a9a">版权所有© 2018-2025 东北财经大学教务处</div>
</body></html>
